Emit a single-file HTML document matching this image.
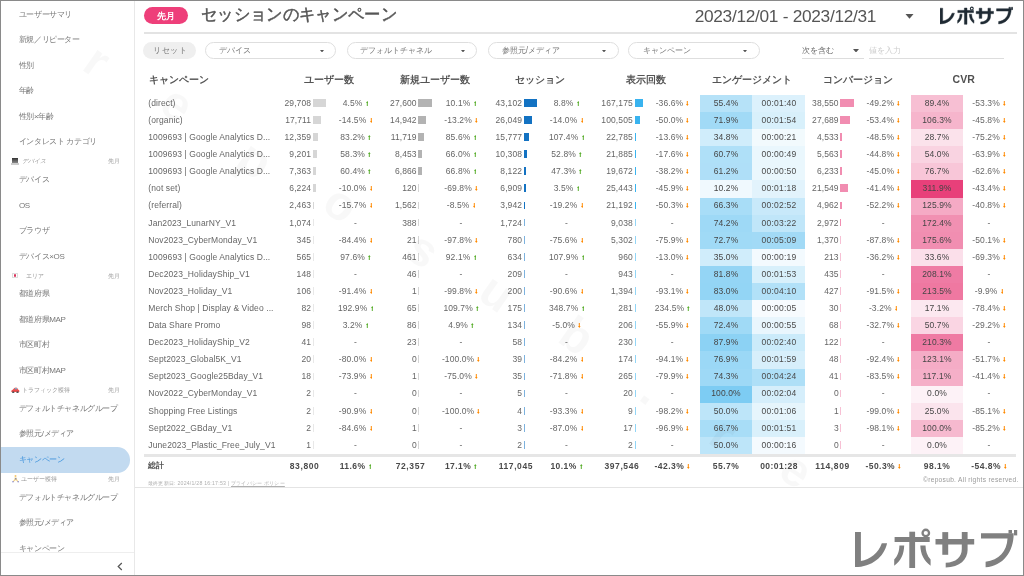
<!DOCTYPE html><html><head><meta charset="utf-8"><style>
html,body{margin:0;padding:0;}
body{width:1024px;height:576px;overflow:hidden;position:relative;background:#fff;font-family:"Liberation Sans", sans-serif;}
.t{position:absolute;white-space:nowrap;}
.r{position:absolute;}
</style></head><body><div id="w" style="position:absolute;left:0;top:0;width:1024px;height:576px;will-change:transform;">
<div class="r" style="left:134.00px;top:1.00px;width:1.00px;height:575.00px;background:#e8e8e8;"></div>
<div style="position:absolute;left:0;top:0;width:134px;height:552px;overflow:hidden;">
<div class="t" style="top:4.85px;height:20px;line-height:20px;font-size:8px;color:#777;letter-spacing:-0.4px;left:18.90px;">ユーザーサマリ</div>
<div class="t" style="top:30.35px;height:20px;line-height:20px;font-size:8px;color:#777;letter-spacing:-0.4px;left:18.90px;">新規／リピーター</div>
<div class="t" style="top:55.85px;height:20px;line-height:20px;font-size:8px;color:#777;letter-spacing:-0.4px;left:18.90px;">性別</div>
<div class="t" style="top:81.35px;height:20px;line-height:20px;font-size:8px;color:#777;letter-spacing:-0.4px;left:18.90px;">年齢</div>
<div class="t" style="top:106.85px;height:20px;line-height:20px;font-size:8px;color:#777;letter-spacing:-0.4px;left:18.90px;">性別×年齢</div>
<div class="t" style="top:132.35px;height:20px;line-height:20px;font-size:8px;color:#777;letter-spacing:-0.4px;left:18.90px;">インタレスト カテゴリ</div>
<div class="r" style="left:11.50px;top:157.75px;width:6.50px;height:5.50px;background:#555;background:linear-gradient(#333,#888);"></div>
<div class="r" style="left:11.00px;top:163.25px;width:7.50px;height:1.50px;background:#ccc;"></div>
<div class="t" style="top:151.25px;height:20px;line-height:20px;font-size:6px;color:#999;left:21.50px;font-style:italic;">デバイス</div>
<div class="t" style="top:151.25px;height:20px;line-height:20px;font-size:6px;color:#a0a0a0;left:108.30px;">先月</div>
<div class="t" style="top:170.15px;height:20px;line-height:20px;font-size:8px;color:#777;letter-spacing:-0.4px;left:18.90px;">デバイス</div>
<div class="t" style="top:195.65px;height:20px;line-height:20px;font-size:8px;color:#777;letter-spacing:-0.4px;left:18.90px;">OS</div>
<div class="t" style="top:221.15px;height:20px;line-height:20px;font-size:8px;color:#777;letter-spacing:-0.4px;left:18.90px;">ブラウザ</div>
<div class="t" style="top:246.65px;height:20px;line-height:20px;font-size:8px;color:#777;letter-spacing:-0.4px;left:18.90px;">デバイス×OS</div>
<div class="r" style="left:11.80px;top:272.75px;width:6.40px;height:5.60px;background:#fff;border:0.5px solid #ddd;box-sizing:border-box;"></div>
<div class="r" style="left:13.80px;top:274.25px;width:2.60px;height:2.60px;background:#d9325a;border-radius:50%;"></div>
<div class="t" style="top:265.55px;height:20px;line-height:20px;font-size:6px;color:#999;left:26.00px;">エリア</div>
<div class="t" style="top:265.55px;height:20px;line-height:20px;font-size:6px;color:#a0a0a0;left:108.30px;">先月</div>
<div class="t" style="top:284.45px;height:20px;line-height:20px;font-size:8px;color:#777;letter-spacing:-0.4px;left:18.90px;">都道府県</div>
<div class="t" style="top:309.95px;height:20px;line-height:20px;font-size:8px;color:#777;letter-spacing:-0.4px;left:18.90px;">都道府県MAP</div>
<div class="t" style="top:335.45px;height:20px;line-height:20px;font-size:8px;color:#777;letter-spacing:-0.4px;left:18.90px;">市区町村</div>
<div class="t" style="top:360.95px;height:20px;line-height:20px;font-size:8px;color:#777;letter-spacing:-0.4px;left:18.90px;">市区町村MAP</div>
<svg style="position:absolute;left:11px;top:386.65px" width="8.5" height="6.5" viewBox="0 0 17 13"><path d="M4 5 Q6 1 10 1 Q13 1 14 5 L16 6 Q17 7 16.5 10 L1 10 Q0 8 1 7 Z" fill="#ec4b4b"/><path d="M6.5 4.5 Q8 2 10 2 Q12 2 12.5 4.5 Z" fill="#5ec3e8"/><circle cx="4.5" cy="10.5" r="2.2" fill="#555"/><circle cx="13" cy="10.5" r="2.2" fill="#555"/></svg>
<div class="t" style="top:379.85px;height:20px;line-height:20px;font-size:6px;color:#999;left:22.00px;">トラフィック獲得</div>
<div class="t" style="top:379.85px;height:20px;line-height:20px;font-size:6px;color:#a0a0a0;left:108.30px;">先月</div>
<div class="t" style="top:398.75px;height:20px;line-height:20px;font-size:8px;color:#777;letter-spacing:-0.4px;left:18.90px;">デフォルトチャネルグループ</div>
<div class="t" style="top:424.25px;height:20px;line-height:20px;font-size:8px;color:#777;letter-spacing:-0.4px;left:18.90px;">参照元/メディア</div>
<div class="r" style="left:1.00px;top:447.00px;width:129.00px;height:25.50px;background:#c2daf0;border-radius:0 12.75px 12.75px 0;"></div>
<div class="t" style="top:449.75px;height:20px;line-height:20px;font-size:8px;color:#3f93dc;letter-spacing:-0.4px;left:18.90px;">キャンペーン</div>
<svg style="position:absolute;left:11.5px;top:475.05px" width="7" height="7.5" viewBox="0 0 14 15"><circle cx="7" cy="2.2" r="2" fill="#f5c76b"/><path d="M5 5 L9 5 L10 9 L13 13 L11.5 14 L7.5 10 L3 14 L1.5 13 L5 8 Z" fill="#f3d38a"/><path d="M6 6 L8.5 6 L9 9 L6 9 Z" fill="#8a8fb0"/><circle cx="2" cy="13.5" r="1.3" fill="#6b70c8"/><circle cx="12.3" cy="13.5" r="1.3" fill="#6b70c8"/></svg>
<div class="t" style="top:468.65px;height:20px;line-height:20px;font-size:6px;color:#999;left:21.40px;">ユーザー獲得</div>
<div class="t" style="top:468.65px;height:20px;line-height:20px;font-size:6px;color:#a0a0a0;left:108.30px;">先月</div>
<div class="t" style="top:487.55px;height:20px;line-height:20px;font-size:8px;color:#777;letter-spacing:-0.4px;left:18.90px;">デフォルトチャネルグループ</div>
<div class="t" style="top:513.05px;height:20px;line-height:20px;font-size:8px;color:#777;letter-spacing:-0.4px;left:18.90px;">参照元/メディア</div>
<div class="t" style="top:538.55px;height:20px;line-height:20px;font-size:8px;color:#777;letter-spacing:-0.4px;left:18.90px;">キャンペーン</div>
</div>
<div class="r" style="left:1.00px;top:552.00px;width:133.00px;height:1.00px;background:#eeeeee;"></div>
<svg style="position:absolute;left:117px;top:562px" width="6" height="9" viewBox="0 0 6 9"><path d="M4.8 1 L1.2 4.5 L4.8 8" fill="none" stroke="#555" stroke-width="1.2"/></svg>
<div class="r" style="left:143.60px;top:6.50px;width:44.00px;height:17.30px;background:#ee3f7a;border-radius:8.7px;"></div>
<div class="t" style="top:6.40px;height:20px;line-height:20px;font-size:8.6px;color:#fff;font-weight:bold;left:15.50px;width:300px;text-align:center;">先月</div>
<div class="t" style="top:4.00px;height:20px;line-height:20px;font-size:16.5px;color:#555;left:200.80px;-webkit-text-stroke:0.45px #555;transform:scaleX(0.96);transform-origin:0 0;">セッションのキャンペーン</div>
<div class="t" style="top:5.70px;height:20px;line-height:20px;font-size:17.3px;color:#555;letter-spacing:-0.3px;left:694.70px;">2023/12/01 - 2023/12/31</div>
<svg style="position:absolute;left:905px;top:13.5px" width="9" height="5" viewBox="0 0 9 5"><path d="M0.5 0 L8.5 0 L4.5 4.8 Z" fill="#555"/></svg>
<div class="r" style="left:143.60px;top:32.40px;width:873.00px;height:1.50px;background:#e3e3e3;"></div>
<svg style="position:absolute;left:940.3px;top:5.35px" width="73.19" height="19.53" viewBox="0 -5 163 43.5"><g fill="#1f2a33" stroke="#1f2a33" stroke-width="1.0" stroke-linejoin="round"><path d="M0 2.1 L5.9 2.1 L5.9 30.9 C15 29.5 23.5 23 26.8 13.2 L32.1 13.2 C29 27 17 37 0 37.1 Z"/><path d="M39.6 7 L74.7 7 L74.7 12 L39.6 12 Z"/><path d="M54.3 1.7 L60.1 1.7 L60.1 38 L54.3 38 Z"/><path d="M44.4 15.5 L49.2 15.5 C49 24 46 31 39.2 35.7 L39.2 29.5 C43 25.5 44.3 21 44.4 15.5 Z"/><path d="M70.5 15.5 L65.3 15.5 C65.5 24 69 31 75.6 35.7 L75.6 29.5 C72 25.5 70.6 21 70.5 15.5 Z"/><circle cx="70.8" cy="3.0" r="3.25" fill="none" style="stroke-width:2.3px"/><path d="M80.5 9.1 L119.2 9.1 L119.2 14.4 L80.5 14.4 Z"/><path d="M87.3 2.1 L93.2 2.1 L93.2 24.8 L87.3 24.8 Z"/><path d="M106.8 2.1 L112.6 2.1 L112.6 20 C112.6 29 105 37.5 90.7 37.5 L90.7 32.7 C101 32.5 106.8 27 106.8 19 Z"/><path d="M126 3.2 L158.7 3.2 C158.7 22 148 36 130.6 37.2 L130.6 31.8 C144 30 152 21 152.5 8.5 L126 8.5 Z"/><path d="M153.5 0 L157 0 L157 3.5 L153.5 3.5 Z"/><path d="M159 0 L162.2 0 L162.2 5.4 L159 5.4 Z"/></g></svg>
<div class="r" style="left:143.20px;top:41.90px;width:53.10px;height:17.50px;background:#efefef;border-radius:8.75px;"></div>
<div class="t" style="top:40.60px;height:20px;line-height:20px;font-size:8.2px;color:#777;letter-spacing:0.6px;left:20.50px;width:300px;text-align:center;">リセット</div>
<div class="r" style="left:205.4px;top:41.9px;width:130.90px;height:17.5px;border:1.4px solid #dedede;border-radius:9px;box-sizing:border-box;"></div>
<div class="t" style="top:40.60px;height:20px;line-height:20px;font-size:8.2px;color:#777;left:219.20px;">デバイス</div>
<svg style="position:absolute;left:319.7px;top:49.6px" width="4" height="2.5" viewBox="0 0 4 2.5"><path d="M0 0 L4 0 L2 2.5 Z" fill="#555"/></svg>
<div class="r" style="left:346.6px;top:41.9px;width:130.90px;height:17.5px;border:1.4px solid #dedede;border-radius:9px;box-sizing:border-box;"></div>
<div class="t" style="top:40.60px;height:20px;line-height:20px;font-size:8.2px;color:#777;left:360.40px;">デフォルトチャネル</div>
<svg style="position:absolute;left:460.9px;top:49.6px" width="4" height="2.5" viewBox="0 0 4 2.5"><path d="M0 0 L4 0 L2 2.5 Z" fill="#555"/></svg>
<div class="r" style="left:487.8px;top:41.9px;width:130.80px;height:17.5px;border:1.4px solid #dedede;border-radius:9px;box-sizing:border-box;"></div>
<div class="t" style="top:40.60px;height:20px;line-height:20px;font-size:8.2px;color:#777;left:501.70px;">参照元/メディア</div>
<svg style="position:absolute;left:602px;top:49.6px" width="4" height="2.5" viewBox="0 0 4 2.5"><path d="M0 0 L4 0 L2 2.5 Z" fill="#555"/></svg>
<div class="r" style="left:628.4px;top:41.9px;width:131.60px;height:17.5px;border:1.4px solid #dedede;border-radius:9px;box-sizing:border-box;"></div>
<div class="t" style="top:40.60px;height:20px;line-height:20px;font-size:8.2px;color:#777;left:643.20px;">キャンペーン</div>
<svg style="position:absolute;left:743px;top:49.6px" width="4" height="2.5" viewBox="0 0 4 2.5"><path d="M0 0 L4 0 L2 2.5 Z" fill="#555"/></svg>
<div class="t" style="top:40.60px;height:20px;line-height:20px;font-size:8.2px;color:#666;left:802.30px;">次を含む</div>
<svg style="position:absolute;left:853.4px;top:48.9px" width="6" height="3.5" viewBox="0 0 6 3.5"><path d="M0 0 L6 0 L3 3.5 Z" fill="#555"/></svg>
<div class="r" style="left:802.00px;top:58.00px;width:61.50px;height:0.80px;background:#ddd;"></div>
<div class="t" style="top:40.60px;height:20px;line-height:20px;font-size:8.2px;color:#ccc;left:868.70px;">値を入力</div>
<div class="r" style="left:869.00px;top:58.00px;width:135.00px;height:0.80px;background:#ddd;"></div>
<div class="t" style="top:69.60px;height:20px;line-height:20px;font-size:9.5px;color:#555;font-weight:bold;left:148.60px;">キャンペーン</div>
<div class="t" style="top:69.60px;height:20px;line-height:20px;font-size:9.5px;color:#555;font-weight:bold;left:179.10px;width:300px;text-align:center;">ユーザー数</div>
<div class="t" style="top:69.60px;height:20px;line-height:20px;font-size:9.5px;color:#555;font-weight:bold;left:284.70px;width:300px;text-align:center;">新規ユーザー数</div>
<div class="t" style="top:69.60px;height:20px;line-height:20px;font-size:9.5px;color:#555;font-weight:bold;left:390.20px;width:300px;text-align:center;">セッション</div>
<div class="t" style="top:69.60px;height:20px;line-height:20px;font-size:9.5px;color:#555;font-weight:bold;left:496.00px;width:300px;text-align:center;">表示回数</div>
<div class="t" style="top:69.60px;height:20px;line-height:20px;font-size:9.5px;color:#555;font-weight:bold;left:602.40px;width:300px;text-align:center;">エンゲージメント</div>
<div class="t" style="top:69.60px;height:20px;line-height:20px;font-size:9.5px;color:#555;font-weight:bold;left:707.50px;width:300px;text-align:center;">コンバージョン</div>
<div class="t" style="top:68.90px;height:20px;line-height:20px;font-size:10.5px;color:#505050;font-weight:bold;left:813.70px;width:300px;text-align:center;">CVR</div>
<div class="r" style="left:699.50px;top:95.00px;width:52.80px;height:17.14px;background:#b6e2f8;"></div>
<div class="r" style="left:752.30px;top:95.00px;width:52.80px;height:17.14px;background:#dcf1fc;"></div>
<div class="r" style="left:910.70px;top:95.00px;width:52.80px;height:17.14px;background:#f7bfd3;"></div>
<div class="t" style="top:92.85px;height:20px;line-height:20px;font-size:8.5px;color:#666;letter-spacing:0.1px;left:148.30px;">(direct)</div>
<div class="t" style="top:92.85px;height:20px;line-height:20px;font-size:8.5px;color:#666;letter-spacing:0.1px;right:713.00px;margin-right:-0.1px;">29,708</div>
<div class="r" style="left:313.00px;top:99.00px;width:13.00px;height:7.80px;background:#d6d6d6;"></div>
<div class="t" style="top:92.85px;height:20px;line-height:20px;font-size:8.5px;color:#666;letter-spacing:0.1px;right:607.40px;margin-right:-0.1px;">27,600</div>
<div class="r" style="left:418.20px;top:99.00px;width:13.60px;height:7.80px;background:#b3b3b3;"></div>
<div class="t" style="top:92.85px;height:20px;line-height:20px;font-size:8.5px;color:#666;letter-spacing:0.1px;right:502.00px;margin-right:-0.1px;">43,102</div>
<div class="r" style="left:524.00px;top:99.00px;width:13.00px;height:7.80px;background:#1372c2;"></div>
<div class="t" style="top:92.85px;height:20px;line-height:20px;font-size:8.5px;color:#666;letter-spacing:0.1px;right:391.30px;margin-right:-0.1px;">167,175</div>
<div class="r" style="left:634.70px;top:99.00px;width:8.30px;height:7.80px;background:#39b3ef;"></div>
<div class="t" style="top:92.85px;height:20px;line-height:20px;font-size:8.5px;color:#666;letter-spacing:0.1px;right:185.40px;margin-right:-0.1px;">38,550</div>
<div class="r" style="left:840.20px;top:99.00px;width:13.80px;height:7.80px;background:#f18db1;"></div>
<div class="t" style="top:92.85px;height:20px;line-height:20px;font-size:8.5px;color:#666;letter-spacing:0.1px;left:205.50px;width:300px;text-align:center;">4.5%<svg width="2.6" height="5" viewBox="0 0 2.6 5" style="margin-left:3.2px;vertical-align:0px"><path d="M1.3 0 L2.6 2 L1.8 2 L1.8 5 L0.8 5 L0.8 2 L0 2 Z" fill="#5aae2e"/></svg></div>
<div class="t" style="top:92.85px;height:20px;line-height:20px;font-size:8.5px;color:#666;letter-spacing:0.1px;left:311.00px;width:300px;text-align:center;">10.1%<svg width="2.6" height="5" viewBox="0 0 2.6 5" style="margin-left:3.2px;vertical-align:0px"><path d="M1.3 0 L2.6 2 L1.8 2 L1.8 5 L0.8 5 L0.8 2 L0 2 Z" fill="#5aae2e"/></svg></div>
<div class="t" style="top:92.85px;height:20px;line-height:20px;font-size:8.5px;color:#666;letter-spacing:0.1px;left:416.50px;width:300px;text-align:center;">8.8%<svg width="2.6" height="5" viewBox="0 0 2.6 5" style="margin-left:3.2px;vertical-align:0px"><path d="M1.3 0 L2.6 2 L1.8 2 L1.8 5 L0.8 5 L0.8 2 L0 2 Z" fill="#5aae2e"/></svg></div>
<div class="t" style="top:92.85px;height:20px;line-height:20px;font-size:8.5px;color:#666;letter-spacing:0.1px;left:522.30px;width:300px;text-align:center;">-36.6%<svg width="2.6" height="5" viewBox="0 0 2.6 5" style="margin-left:3.2px;vertical-align:0px"><path d="M1.3 5 L2.6 3 L1.8 3 L1.8 0 L0.8 0 L0.8 3 L0 3 Z" fill="#ff8a00"/></svg></div>
<div class="t" style="top:92.85px;height:20px;line-height:20px;font-size:8.5px;color:#666;letter-spacing:0.1px;left:733.20px;width:300px;text-align:center;">-49.2%<svg width="2.6" height="5" viewBox="0 0 2.6 5" style="margin-left:3.2px;vertical-align:0px"><path d="M1.3 5 L2.6 3 L1.8 3 L1.8 0 L0.8 0 L0.8 3 L0 3 Z" fill="#ff8a00"/></svg></div>
<div class="t" style="top:92.85px;height:20px;line-height:20px;font-size:8.5px;color:#666;letter-spacing:0.1px;left:839.00px;width:300px;text-align:center;">-53.3%<svg width="2.6" height="5" viewBox="0 0 2.6 5" style="margin-left:3.2px;vertical-align:0px"><path d="M1.3 5 L2.6 3 L1.8 3 L1.8 0 L0.8 0 L0.8 3 L0 3 Z" fill="#ff8a00"/></svg></div>
<div class="t" style="top:92.85px;height:20px;line-height:20px;font-size:8.5px;color:#464646;letter-spacing:0.1px;left:576.00px;width:300px;text-align:center;">55.4%</div>
<div class="t" style="top:92.85px;height:20px;line-height:20px;font-size:8.5px;color:#4a4a4a;letter-spacing:0.25px;left:629.00px;width:300px;text-align:center;">00:01:40</div>
<div class="t" style="top:92.85px;height:20px;line-height:20px;font-size:8.5px;color:#464646;letter-spacing:0.1px;left:787.00px;width:300px;text-align:center;">89.4%</div>
<div class="r" style="left:699.50px;top:112.09px;width:52.80px;height:17.14px;background:#a1daf6;"></div>
<div class="r" style="left:752.30px;top:112.09px;width:52.80px;height:17.14px;background:#d8f0fb;"></div>
<div class="r" style="left:910.70px;top:112.09px;width:52.80px;height:17.14px;background:#f6b5cc;"></div>
<div class="t" style="top:109.94px;height:20px;line-height:20px;font-size:8.5px;color:#666;letter-spacing:0.1px;left:148.30px;">(organic)</div>
<div class="t" style="top:109.94px;height:20px;line-height:20px;font-size:8.5px;color:#666;letter-spacing:0.1px;right:713.00px;margin-right:-0.1px;">17,711</div>
<div class="r" style="left:313.00px;top:116.09px;width:7.75px;height:7.80px;background:#d6d6d6;"></div>
<div class="t" style="top:109.94px;height:20px;line-height:20px;font-size:8.5px;color:#666;letter-spacing:0.1px;right:607.40px;margin-right:-0.1px;">14,942</div>
<div class="r" style="left:418.20px;top:116.09px;width:7.36px;height:7.80px;background:#b3b3b3;"></div>
<div class="t" style="top:109.94px;height:20px;line-height:20px;font-size:8.5px;color:#666;letter-spacing:0.1px;right:502.00px;margin-right:-0.1px;">26,049</div>
<div class="r" style="left:524.00px;top:116.09px;width:7.86px;height:7.80px;background:#1372c2;"></div>
<div class="t" style="top:109.94px;height:20px;line-height:20px;font-size:8.5px;color:#666;letter-spacing:0.1px;right:391.30px;margin-right:-0.1px;">100,505</div>
<div class="r" style="left:634.70px;top:116.09px;width:4.99px;height:7.80px;background:#39b3ef;"></div>
<div class="t" style="top:109.94px;height:20px;line-height:20px;font-size:8.5px;color:#666;letter-spacing:0.1px;right:185.40px;margin-right:-0.1px;">27,689</div>
<div class="r" style="left:840.20px;top:116.09px;width:9.91px;height:7.80px;background:#f18db1;"></div>
<div class="t" style="top:109.94px;height:20px;line-height:20px;font-size:8.5px;color:#666;letter-spacing:0.1px;left:205.50px;width:300px;text-align:center;">-14.5%<svg width="2.6" height="5" viewBox="0 0 2.6 5" style="margin-left:3.2px;vertical-align:0px"><path d="M1.3 5 L2.6 3 L1.8 3 L1.8 0 L0.8 0 L0.8 3 L0 3 Z" fill="#ff8a00"/></svg></div>
<div class="t" style="top:109.94px;height:20px;line-height:20px;font-size:8.5px;color:#666;letter-spacing:0.1px;left:311.00px;width:300px;text-align:center;">-13.2%<svg width="2.6" height="5" viewBox="0 0 2.6 5" style="margin-left:3.2px;vertical-align:0px"><path d="M1.3 5 L2.6 3 L1.8 3 L1.8 0 L0.8 0 L0.8 3 L0 3 Z" fill="#ff8a00"/></svg></div>
<div class="t" style="top:109.94px;height:20px;line-height:20px;font-size:8.5px;color:#666;letter-spacing:0.1px;left:416.50px;width:300px;text-align:center;">-14.0%<svg width="2.6" height="5" viewBox="0 0 2.6 5" style="margin-left:3.2px;vertical-align:0px"><path d="M1.3 5 L2.6 3 L1.8 3 L1.8 0 L0.8 0 L0.8 3 L0 3 Z" fill="#ff8a00"/></svg></div>
<div class="t" style="top:109.94px;height:20px;line-height:20px;font-size:8.5px;color:#666;letter-spacing:0.1px;left:522.30px;width:300px;text-align:center;">-50.0%<svg width="2.6" height="5" viewBox="0 0 2.6 5" style="margin-left:3.2px;vertical-align:0px"><path d="M1.3 5 L2.6 3 L1.8 3 L1.8 0 L0.8 0 L0.8 3 L0 3 Z" fill="#ff8a00"/></svg></div>
<div class="t" style="top:109.94px;height:20px;line-height:20px;font-size:8.5px;color:#666;letter-spacing:0.1px;left:733.20px;width:300px;text-align:center;">-53.4%<svg width="2.6" height="5" viewBox="0 0 2.6 5" style="margin-left:3.2px;vertical-align:0px"><path d="M1.3 5 L2.6 3 L1.8 3 L1.8 0 L0.8 0 L0.8 3 L0 3 Z" fill="#ff8a00"/></svg></div>
<div class="t" style="top:109.94px;height:20px;line-height:20px;font-size:8.5px;color:#666;letter-spacing:0.1px;left:839.00px;width:300px;text-align:center;">-45.8%<svg width="2.6" height="5" viewBox="0 0 2.6 5" style="margin-left:3.2px;vertical-align:0px"><path d="M1.3 5 L2.6 3 L1.8 3 L1.8 0 L0.8 0 L0.8 3 L0 3 Z" fill="#ff8a00"/></svg></div>
<div class="t" style="top:109.94px;height:20px;line-height:20px;font-size:8.5px;color:#464646;letter-spacing:0.1px;left:576.00px;width:300px;text-align:center;">71.9%</div>
<div class="t" style="top:109.94px;height:20px;line-height:20px;font-size:8.5px;color:#4a4a4a;letter-spacing:0.25px;left:629.00px;width:300px;text-align:center;">00:01:54</div>
<div class="t" style="top:109.94px;height:20px;line-height:20px;font-size:8.5px;color:#464646;letter-spacing:0.1px;left:787.00px;width:300px;text-align:center;">106.3%</div>
<div class="r" style="left:699.50px;top:129.19px;width:52.80px;height:17.14px;background:#d0edfb;"></div>
<div class="r" style="left:752.30px;top:129.19px;width:52.80px;height:17.14px;background:#f2fafd;"></div>
<div class="r" style="left:910.70px;top:129.19px;width:52.80px;height:17.14px;background:#fbe2eb;"></div>
<div class="t" style="top:127.04px;height:20px;line-height:20px;font-size:8.5px;color:#666;letter-spacing:0.1px;left:148.30px;">1009693 | Google Analytics D...</div>
<div class="t" style="top:127.04px;height:20px;line-height:20px;font-size:8.5px;color:#666;letter-spacing:0.1px;right:713.00px;margin-right:-0.1px;">12,359</div>
<div class="r" style="left:313.00px;top:133.19px;width:5.41px;height:7.80px;background:#d6d6d6;"></div>
<div class="t" style="top:127.04px;height:20px;line-height:20px;font-size:8.5px;color:#666;letter-spacing:0.1px;right:607.40px;margin-right:-0.1px;">11,719</div>
<div class="r" style="left:418.20px;top:133.19px;width:5.77px;height:7.80px;background:#b3b3b3;"></div>
<div class="t" style="top:127.04px;height:20px;line-height:20px;font-size:8.5px;color:#666;letter-spacing:0.1px;right:502.00px;margin-right:-0.1px;">15,777</div>
<div class="r" style="left:524.00px;top:133.19px;width:4.76px;height:7.80px;background:#1372c2;"></div>
<div class="t" style="top:127.04px;height:20px;line-height:20px;font-size:8.5px;color:#666;letter-spacing:0.1px;right:391.30px;margin-right:-0.1px;">22,785</div>
<div class="r" style="left:634.70px;top:133.19px;width:1.13px;height:7.80px;background:#39b3ef;"></div>
<div class="t" style="top:127.04px;height:20px;line-height:20px;font-size:8.5px;color:#666;letter-spacing:0.1px;right:185.40px;margin-right:-0.1px;">4,533</div>
<div class="r" style="left:840.20px;top:133.19px;width:1.62px;height:7.80px;background:#f18db1;"></div>
<div class="t" style="top:127.04px;height:20px;line-height:20px;font-size:8.5px;color:#666;letter-spacing:0.1px;left:205.50px;width:300px;text-align:center;">83.2%<svg width="2.6" height="5" viewBox="0 0 2.6 5" style="margin-left:3.2px;vertical-align:0px"><path d="M1.3 0 L2.6 2 L1.8 2 L1.8 5 L0.8 5 L0.8 2 L0 2 Z" fill="#5aae2e"/></svg></div>
<div class="t" style="top:127.04px;height:20px;line-height:20px;font-size:8.5px;color:#666;letter-spacing:0.1px;left:311.00px;width:300px;text-align:center;">85.6%<svg width="2.6" height="5" viewBox="0 0 2.6 5" style="margin-left:3.2px;vertical-align:0px"><path d="M1.3 0 L2.6 2 L1.8 2 L1.8 5 L0.8 5 L0.8 2 L0 2 Z" fill="#5aae2e"/></svg></div>
<div class="t" style="top:127.04px;height:20px;line-height:20px;font-size:8.5px;color:#666;letter-spacing:0.1px;left:416.50px;width:300px;text-align:center;">107.4%<svg width="2.6" height="5" viewBox="0 0 2.6 5" style="margin-left:3.2px;vertical-align:0px"><path d="M1.3 0 L2.6 2 L1.8 2 L1.8 5 L0.8 5 L0.8 2 L0 2 Z" fill="#5aae2e"/></svg></div>
<div class="t" style="top:127.04px;height:20px;line-height:20px;font-size:8.5px;color:#666;letter-spacing:0.1px;left:522.30px;width:300px;text-align:center;">-13.6%<svg width="2.6" height="5" viewBox="0 0 2.6 5" style="margin-left:3.2px;vertical-align:0px"><path d="M1.3 5 L2.6 3 L1.8 3 L1.8 0 L0.8 0 L0.8 3 L0 3 Z" fill="#ff8a00"/></svg></div>
<div class="t" style="top:127.04px;height:20px;line-height:20px;font-size:8.5px;color:#666;letter-spacing:0.1px;left:733.20px;width:300px;text-align:center;">-48.5%<svg width="2.6" height="5" viewBox="0 0 2.6 5" style="margin-left:3.2px;vertical-align:0px"><path d="M1.3 5 L2.6 3 L1.8 3 L1.8 0 L0.8 0 L0.8 3 L0 3 Z" fill="#ff8a00"/></svg></div>
<div class="t" style="top:127.04px;height:20px;line-height:20px;font-size:8.5px;color:#666;letter-spacing:0.1px;left:839.00px;width:300px;text-align:center;">-75.2%<svg width="2.6" height="5" viewBox="0 0 2.6 5" style="margin-left:3.2px;vertical-align:0px"><path d="M1.3 5 L2.6 3 L1.8 3 L1.8 0 L0.8 0 L0.8 3 L0 3 Z" fill="#ff8a00"/></svg></div>
<div class="t" style="top:127.04px;height:20px;line-height:20px;font-size:8.5px;color:#464646;letter-spacing:0.1px;left:576.00px;width:300px;text-align:center;">34.8%</div>
<div class="t" style="top:127.04px;height:20px;line-height:20px;font-size:8.5px;color:#4a4a4a;letter-spacing:0.25px;left:629.00px;width:300px;text-align:center;">00:00:21</div>
<div class="t" style="top:127.04px;height:20px;line-height:20px;font-size:8.5px;color:#464646;letter-spacing:0.1px;left:787.00px;width:300px;text-align:center;">28.7%</div>
<div class="r" style="left:699.50px;top:146.28px;width:52.80px;height:17.14px;background:#afe0f8;"></div>
<div class="r" style="left:752.30px;top:146.28px;width:52.80px;height:17.14px;background:#eaf7fd;"></div>
<div class="r" style="left:910.70px;top:146.28px;width:52.80px;height:17.14px;background:#f9d3e1;"></div>
<div class="t" style="top:144.13px;height:20px;line-height:20px;font-size:8.5px;color:#666;letter-spacing:0.1px;left:148.30px;">1009693 | Google Analytics D...</div>
<div class="t" style="top:144.13px;height:20px;line-height:20px;font-size:8.5px;color:#666;letter-spacing:0.1px;right:713.00px;margin-right:-0.1px;">9,201</div>
<div class="r" style="left:313.00px;top:150.28px;width:4.03px;height:7.80px;background:#d6d6d6;"></div>
<div class="t" style="top:144.13px;height:20px;line-height:20px;font-size:8.5px;color:#666;letter-spacing:0.1px;right:607.40px;margin-right:-0.1px;">8,453</div>
<div class="r" style="left:418.20px;top:150.28px;width:4.17px;height:7.80px;background:#b3b3b3;"></div>
<div class="t" style="top:144.13px;height:20px;line-height:20px;font-size:8.5px;color:#666;letter-spacing:0.1px;right:502.00px;margin-right:-0.1px;">10,308</div>
<div class="r" style="left:524.00px;top:150.28px;width:3.11px;height:7.80px;background:#1372c2;"></div>
<div class="t" style="top:144.13px;height:20px;line-height:20px;font-size:8.5px;color:#666;letter-spacing:0.1px;right:391.30px;margin-right:-0.1px;">21,885</div>
<div class="r" style="left:634.70px;top:150.28px;width:1.09px;height:7.80px;background:#39b3ef;"></div>
<div class="t" style="top:144.13px;height:20px;line-height:20px;font-size:8.5px;color:#666;letter-spacing:0.1px;right:185.40px;margin-right:-0.1px;">5,563</div>
<div class="r" style="left:840.20px;top:150.28px;width:1.99px;height:7.80px;background:#f18db1;"></div>
<div class="t" style="top:144.13px;height:20px;line-height:20px;font-size:8.5px;color:#666;letter-spacing:0.1px;left:205.50px;width:300px;text-align:center;">58.3%<svg width="2.6" height="5" viewBox="0 0 2.6 5" style="margin-left:3.2px;vertical-align:0px"><path d="M1.3 0 L2.6 2 L1.8 2 L1.8 5 L0.8 5 L0.8 2 L0 2 Z" fill="#5aae2e"/></svg></div>
<div class="t" style="top:144.13px;height:20px;line-height:20px;font-size:8.5px;color:#666;letter-spacing:0.1px;left:311.00px;width:300px;text-align:center;">66.0%<svg width="2.6" height="5" viewBox="0 0 2.6 5" style="margin-left:3.2px;vertical-align:0px"><path d="M1.3 0 L2.6 2 L1.8 2 L1.8 5 L0.8 5 L0.8 2 L0 2 Z" fill="#5aae2e"/></svg></div>
<div class="t" style="top:144.13px;height:20px;line-height:20px;font-size:8.5px;color:#666;letter-spacing:0.1px;left:416.50px;width:300px;text-align:center;">52.8%<svg width="2.6" height="5" viewBox="0 0 2.6 5" style="margin-left:3.2px;vertical-align:0px"><path d="M1.3 0 L2.6 2 L1.8 2 L1.8 5 L0.8 5 L0.8 2 L0 2 Z" fill="#5aae2e"/></svg></div>
<div class="t" style="top:144.13px;height:20px;line-height:20px;font-size:8.5px;color:#666;letter-spacing:0.1px;left:522.30px;width:300px;text-align:center;">-17.6%<svg width="2.6" height="5" viewBox="0 0 2.6 5" style="margin-left:3.2px;vertical-align:0px"><path d="M1.3 5 L2.6 3 L1.8 3 L1.8 0 L0.8 0 L0.8 3 L0 3 Z" fill="#ff8a00"/></svg></div>
<div class="t" style="top:144.13px;height:20px;line-height:20px;font-size:8.5px;color:#666;letter-spacing:0.1px;left:733.20px;width:300px;text-align:center;">-44.8%<svg width="2.6" height="5" viewBox="0 0 2.6 5" style="margin-left:3.2px;vertical-align:0px"><path d="M1.3 5 L2.6 3 L1.8 3 L1.8 0 L0.8 0 L0.8 3 L0 3 Z" fill="#ff8a00"/></svg></div>
<div class="t" style="top:144.13px;height:20px;line-height:20px;font-size:8.5px;color:#666;letter-spacing:0.1px;left:839.00px;width:300px;text-align:center;">-63.9%<svg width="2.6" height="5" viewBox="0 0 2.6 5" style="margin-left:3.2px;vertical-align:0px"><path d="M1.3 5 L2.6 3 L1.8 3 L1.8 0 L0.8 0 L0.8 3 L0 3 Z" fill="#ff8a00"/></svg></div>
<div class="t" style="top:144.13px;height:20px;line-height:20px;font-size:8.5px;color:#464646;letter-spacing:0.1px;left:576.00px;width:300px;text-align:center;">60.7%</div>
<div class="t" style="top:144.13px;height:20px;line-height:20px;font-size:8.5px;color:#4a4a4a;letter-spacing:0.25px;left:629.00px;width:300px;text-align:center;">00:00:49</div>
<div class="t" style="top:144.13px;height:20px;line-height:20px;font-size:8.5px;color:#464646;letter-spacing:0.1px;left:787.00px;width:300px;text-align:center;">54.0%</div>
<div class="r" style="left:699.50px;top:163.38px;width:52.80px;height:17.14px;background:#afdff8;"></div>
<div class="r" style="left:752.30px;top:163.38px;width:52.80px;height:17.14px;background:#eaf7fd;"></div>
<div class="r" style="left:910.70px;top:163.38px;width:52.80px;height:17.14px;background:#f8c6d8;"></div>
<div class="t" style="top:161.23px;height:20px;line-height:20px;font-size:8.5px;color:#666;letter-spacing:0.1px;left:148.30px;">1009693 | Google Analytics D...</div>
<div class="t" style="top:161.23px;height:20px;line-height:20px;font-size:8.5px;color:#666;letter-spacing:0.1px;right:713.00px;margin-right:-0.1px;">7,363</div>
<div class="r" style="left:313.00px;top:167.38px;width:3.22px;height:7.80px;background:#d6d6d6;"></div>
<div class="t" style="top:161.23px;height:20px;line-height:20px;font-size:8.5px;color:#666;letter-spacing:0.1px;right:607.40px;margin-right:-0.1px;">6,866</div>
<div class="r" style="left:418.20px;top:167.38px;width:3.38px;height:7.80px;background:#b3b3b3;"></div>
<div class="t" style="top:161.23px;height:20px;line-height:20px;font-size:8.5px;color:#666;letter-spacing:0.1px;right:502.00px;margin-right:-0.1px;">8,122</div>
<div class="r" style="left:524.00px;top:167.38px;width:2.45px;height:7.80px;background:#1372c2;"></div>
<div class="t" style="top:161.23px;height:20px;line-height:20px;font-size:8.5px;color:#666;letter-spacing:0.1px;right:391.30px;margin-right:-0.1px;">19,672</div>
<div class="r" style="left:634.70px;top:167.38px;width:0.98px;height:7.80px;background:#39b3ef;"></div>
<div class="t" style="top:161.23px;height:20px;line-height:20px;font-size:8.5px;color:#666;letter-spacing:0.1px;right:185.40px;margin-right:-0.1px;">6,233</div>
<div class="r" style="left:840.20px;top:167.38px;width:2.23px;height:7.80px;background:#f18db1;"></div>
<div class="t" style="top:161.23px;height:20px;line-height:20px;font-size:8.5px;color:#666;letter-spacing:0.1px;left:205.50px;width:300px;text-align:center;">60.4%<svg width="2.6" height="5" viewBox="0 0 2.6 5" style="margin-left:3.2px;vertical-align:0px"><path d="M1.3 0 L2.6 2 L1.8 2 L1.8 5 L0.8 5 L0.8 2 L0 2 Z" fill="#5aae2e"/></svg></div>
<div class="t" style="top:161.23px;height:20px;line-height:20px;font-size:8.5px;color:#666;letter-spacing:0.1px;left:311.00px;width:300px;text-align:center;">66.8%<svg width="2.6" height="5" viewBox="0 0 2.6 5" style="margin-left:3.2px;vertical-align:0px"><path d="M1.3 0 L2.6 2 L1.8 2 L1.8 5 L0.8 5 L0.8 2 L0 2 Z" fill="#5aae2e"/></svg></div>
<div class="t" style="top:161.23px;height:20px;line-height:20px;font-size:8.5px;color:#666;letter-spacing:0.1px;left:416.50px;width:300px;text-align:center;">47.3%<svg width="2.6" height="5" viewBox="0 0 2.6 5" style="margin-left:3.2px;vertical-align:0px"><path d="M1.3 0 L2.6 2 L1.8 2 L1.8 5 L0.8 5 L0.8 2 L0 2 Z" fill="#5aae2e"/></svg></div>
<div class="t" style="top:161.23px;height:20px;line-height:20px;font-size:8.5px;color:#666;letter-spacing:0.1px;left:522.30px;width:300px;text-align:center;">-38.2%<svg width="2.6" height="5" viewBox="0 0 2.6 5" style="margin-left:3.2px;vertical-align:0px"><path d="M1.3 5 L2.6 3 L1.8 3 L1.8 0 L0.8 0 L0.8 3 L0 3 Z" fill="#ff8a00"/></svg></div>
<div class="t" style="top:161.23px;height:20px;line-height:20px;font-size:8.5px;color:#666;letter-spacing:0.1px;left:733.20px;width:300px;text-align:center;">-45.0%<svg width="2.6" height="5" viewBox="0 0 2.6 5" style="margin-left:3.2px;vertical-align:0px"><path d="M1.3 5 L2.6 3 L1.8 3 L1.8 0 L0.8 0 L0.8 3 L0 3 Z" fill="#ff8a00"/></svg></div>
<div class="t" style="top:161.23px;height:20px;line-height:20px;font-size:8.5px;color:#666;letter-spacing:0.1px;left:839.00px;width:300px;text-align:center;">-62.6%<svg width="2.6" height="5" viewBox="0 0 2.6 5" style="margin-left:3.2px;vertical-align:0px"><path d="M1.3 5 L2.6 3 L1.8 3 L1.8 0 L0.8 0 L0.8 3 L0 3 Z" fill="#ff8a00"/></svg></div>
<div class="t" style="top:161.23px;height:20px;line-height:20px;font-size:8.5px;color:#464646;letter-spacing:0.1px;left:576.00px;width:300px;text-align:center;">61.2%</div>
<div class="t" style="top:161.23px;height:20px;line-height:20px;font-size:8.5px;color:#4a4a4a;letter-spacing:0.25px;left:629.00px;width:300px;text-align:center;">00:00:50</div>
<div class="t" style="top:161.23px;height:20px;line-height:20px;font-size:8.5px;color:#464646;letter-spacing:0.1px;left:787.00px;width:300px;text-align:center;">76.7%</div>
<div class="r" style="left:699.50px;top:180.47px;width:52.80px;height:17.14px;background:#f0f9fe;"></div>
<div class="r" style="left:752.30px;top:180.47px;width:52.80px;height:17.14px;background:#e2f3fc;"></div>
<div class="r" style="left:910.70px;top:180.47px;width:52.80px;height:17.14px;background:#e8407a;"></div>
<div class="t" style="top:178.32px;height:20px;line-height:20px;font-size:8.5px;color:#666;letter-spacing:0.1px;left:148.30px;">(not set)</div>
<div class="t" style="top:178.32px;height:20px;line-height:20px;font-size:8.5px;color:#666;letter-spacing:0.1px;right:713.00px;margin-right:-0.1px;">6,224</div>
<div class="r" style="left:313.00px;top:184.47px;width:2.72px;height:7.80px;background:#d6d6d6;"></div>
<div class="t" style="top:178.32px;height:20px;line-height:20px;font-size:8.5px;color:#666;letter-spacing:0.1px;right:607.40px;margin-right:-0.1px;">120</div>
<div class="r" style="left:418.20px;top:184.47px;width:0.80px;height:7.80px;background:#b3b3b3;opacity:0.55;"></div>
<div class="t" style="top:178.32px;height:20px;line-height:20px;font-size:8.5px;color:#666;letter-spacing:0.1px;right:502.00px;margin-right:-0.1px;">6,909</div>
<div class="r" style="left:524.00px;top:184.47px;width:2.08px;height:7.80px;background:#1372c2;"></div>
<div class="t" style="top:178.32px;height:20px;line-height:20px;font-size:8.5px;color:#666;letter-spacing:0.1px;right:391.30px;margin-right:-0.1px;">25,443</div>
<div class="r" style="left:634.70px;top:184.47px;width:1.26px;height:7.80px;background:#39b3ef;"></div>
<div class="t" style="top:178.32px;height:20px;line-height:20px;font-size:8.5px;color:#666;letter-spacing:0.1px;right:185.40px;margin-right:-0.1px;">21,549</div>
<div class="r" style="left:840.20px;top:184.47px;width:7.71px;height:7.80px;background:#f18db1;"></div>
<div class="t" style="top:178.32px;height:20px;line-height:20px;font-size:8.5px;color:#666;letter-spacing:0.1px;left:205.50px;width:300px;text-align:center;">-10.0%<svg width="2.6" height="5" viewBox="0 0 2.6 5" style="margin-left:3.2px;vertical-align:0px"><path d="M1.3 5 L2.6 3 L1.8 3 L1.8 0 L0.8 0 L0.8 3 L0 3 Z" fill="#ff8a00"/></svg></div>
<div class="t" style="top:178.32px;height:20px;line-height:20px;font-size:8.5px;color:#666;letter-spacing:0.1px;left:311.00px;width:300px;text-align:center;">-69.8%<svg width="2.6" height="5" viewBox="0 0 2.6 5" style="margin-left:3.2px;vertical-align:0px"><path d="M1.3 5 L2.6 3 L1.8 3 L1.8 0 L0.8 0 L0.8 3 L0 3 Z" fill="#ff8a00"/></svg></div>
<div class="t" style="top:178.32px;height:20px;line-height:20px;font-size:8.5px;color:#666;letter-spacing:0.1px;left:416.50px;width:300px;text-align:center;">3.5%<svg width="2.6" height="5" viewBox="0 0 2.6 5" style="margin-left:3.2px;vertical-align:0px"><path d="M1.3 0 L2.6 2 L1.8 2 L1.8 5 L0.8 5 L0.8 2 L0 2 Z" fill="#5aae2e"/></svg></div>
<div class="t" style="top:178.32px;height:20px;line-height:20px;font-size:8.5px;color:#666;letter-spacing:0.1px;left:522.30px;width:300px;text-align:center;">-45.9%<svg width="2.6" height="5" viewBox="0 0 2.6 5" style="margin-left:3.2px;vertical-align:0px"><path d="M1.3 5 L2.6 3 L1.8 3 L1.8 0 L0.8 0 L0.8 3 L0 3 Z" fill="#ff8a00"/></svg></div>
<div class="t" style="top:178.32px;height:20px;line-height:20px;font-size:8.5px;color:#666;letter-spacing:0.1px;left:733.20px;width:300px;text-align:center;">-41.4%<svg width="2.6" height="5" viewBox="0 0 2.6 5" style="margin-left:3.2px;vertical-align:0px"><path d="M1.3 5 L2.6 3 L1.8 3 L1.8 0 L0.8 0 L0.8 3 L0 3 Z" fill="#ff8a00"/></svg></div>
<div class="t" style="top:178.32px;height:20px;line-height:20px;font-size:8.5px;color:#666;letter-spacing:0.1px;left:839.00px;width:300px;text-align:center;">-43.4%<svg width="2.6" height="5" viewBox="0 0 2.6 5" style="margin-left:3.2px;vertical-align:0px"><path d="M1.3 5 L2.6 3 L1.8 3 L1.8 0 L0.8 0 L0.8 3 L0 3 Z" fill="#ff8a00"/></svg></div>
<div class="t" style="top:178.32px;height:20px;line-height:20px;font-size:8.5px;color:#464646;letter-spacing:0.1px;left:576.00px;width:300px;text-align:center;">10.2%</div>
<div class="t" style="top:178.32px;height:20px;line-height:20px;font-size:8.5px;color:#4a4a4a;letter-spacing:0.25px;left:629.00px;width:300px;text-align:center;">00:01:18</div>
<div class="t" style="top:178.32px;height:20px;line-height:20px;font-size:8.5px;color:#464646;letter-spacing:0.1px;left:787.00px;width:300px;text-align:center;">311.9%</div>
<div class="r" style="left:699.50px;top:197.57px;width:52.80px;height:17.14px;background:#a8ddf7;"></div>
<div class="r" style="left:752.30px;top:197.57px;width:52.80px;height:17.14px;background:#c8e9fa;"></div>
<div class="r" style="left:910.70px;top:197.57px;width:52.80px;height:17.14px;background:#f5aac5;"></div>
<div class="t" style="top:195.42px;height:20px;line-height:20px;font-size:8.5px;color:#666;letter-spacing:0.1px;left:148.30px;">(referral)</div>
<div class="t" style="top:195.42px;height:20px;line-height:20px;font-size:8.5px;color:#666;letter-spacing:0.1px;right:713.00px;margin-right:-0.1px;">2,463</div>
<div class="r" style="left:313.00px;top:201.57px;width:1.08px;height:7.80px;background:#d6d6d6;"></div>
<div class="t" style="top:195.42px;height:20px;line-height:20px;font-size:8.5px;color:#666;letter-spacing:0.1px;right:607.40px;margin-right:-0.1px;">1,562</div>
<div class="r" style="left:418.20px;top:201.57px;width:0.80px;height:7.80px;background:#b3b3b3;opacity:0.55;"></div>
<div class="t" style="top:195.42px;height:20px;line-height:20px;font-size:8.5px;color:#666;letter-spacing:0.1px;right:502.00px;margin-right:-0.1px;">3,942</div>
<div class="r" style="left:524.00px;top:201.57px;width:1.19px;height:7.80px;background:#1372c2;"></div>
<div class="t" style="top:195.42px;height:20px;line-height:20px;font-size:8.5px;color:#666;letter-spacing:0.1px;right:391.30px;margin-right:-0.1px;">21,192</div>
<div class="r" style="left:634.70px;top:201.57px;width:1.05px;height:7.80px;background:#39b3ef;"></div>
<div class="t" style="top:195.42px;height:20px;line-height:20px;font-size:8.5px;color:#666;letter-spacing:0.1px;right:185.40px;margin-right:-0.1px;">4,962</div>
<div class="r" style="left:840.20px;top:201.57px;width:1.78px;height:7.80px;background:#f18db1;"></div>
<div class="t" style="top:195.42px;height:20px;line-height:20px;font-size:8.5px;color:#666;letter-spacing:0.1px;left:205.50px;width:300px;text-align:center;">-15.7%<svg width="2.6" height="5" viewBox="0 0 2.6 5" style="margin-left:3.2px;vertical-align:0px"><path d="M1.3 5 L2.6 3 L1.8 3 L1.8 0 L0.8 0 L0.8 3 L0 3 Z" fill="#ff8a00"/></svg></div>
<div class="t" style="top:195.42px;height:20px;line-height:20px;font-size:8.5px;color:#666;letter-spacing:0.1px;left:311.00px;width:300px;text-align:center;">-8.5%<svg width="2.6" height="5" viewBox="0 0 2.6 5" style="margin-left:3.2px;vertical-align:0px"><path d="M1.3 5 L2.6 3 L1.8 3 L1.8 0 L0.8 0 L0.8 3 L0 3 Z" fill="#ff8a00"/></svg></div>
<div class="t" style="top:195.42px;height:20px;line-height:20px;font-size:8.5px;color:#666;letter-spacing:0.1px;left:416.50px;width:300px;text-align:center;">-19.2%<svg width="2.6" height="5" viewBox="0 0 2.6 5" style="margin-left:3.2px;vertical-align:0px"><path d="M1.3 5 L2.6 3 L1.8 3 L1.8 0 L0.8 0 L0.8 3 L0 3 Z" fill="#ff8a00"/></svg></div>
<div class="t" style="top:195.42px;height:20px;line-height:20px;font-size:8.5px;color:#666;letter-spacing:0.1px;left:522.30px;width:300px;text-align:center;">-50.3%<svg width="2.6" height="5" viewBox="0 0 2.6 5" style="margin-left:3.2px;vertical-align:0px"><path d="M1.3 5 L2.6 3 L1.8 3 L1.8 0 L0.8 0 L0.8 3 L0 3 Z" fill="#ff8a00"/></svg></div>
<div class="t" style="top:195.42px;height:20px;line-height:20px;font-size:8.5px;color:#666;letter-spacing:0.1px;left:733.20px;width:300px;text-align:center;">-52.2%<svg width="2.6" height="5" viewBox="0 0 2.6 5" style="margin-left:3.2px;vertical-align:0px"><path d="M1.3 5 L2.6 3 L1.8 3 L1.8 0 L0.8 0 L0.8 3 L0 3 Z" fill="#ff8a00"/></svg></div>
<div class="t" style="top:195.42px;height:20px;line-height:20px;font-size:8.5px;color:#666;letter-spacing:0.1px;left:839.00px;width:300px;text-align:center;">-40.8%<svg width="2.6" height="5" viewBox="0 0 2.6 5" style="margin-left:3.2px;vertical-align:0px"><path d="M1.3 5 L2.6 3 L1.8 3 L1.8 0 L0.8 0 L0.8 3 L0 3 Z" fill="#ff8a00"/></svg></div>
<div class="t" style="top:195.42px;height:20px;line-height:20px;font-size:8.5px;color:#464646;letter-spacing:0.1px;left:576.00px;width:300px;text-align:center;">66.3%</div>
<div class="t" style="top:195.42px;height:20px;line-height:20px;font-size:8.5px;color:#4a4a4a;letter-spacing:0.25px;left:629.00px;width:300px;text-align:center;">00:02:52</div>
<div class="t" style="top:195.42px;height:20px;line-height:20px;font-size:8.5px;color:#464646;letter-spacing:0.1px;left:787.00px;width:300px;text-align:center;">125.9%</div>
<div class="r" style="left:699.50px;top:214.66px;width:52.80px;height:17.14px;background:#9ed9f6;"></div>
<div class="r" style="left:752.30px;top:214.66px;width:52.80px;height:17.14px;background:#c0e6f9;"></div>
<div class="r" style="left:910.70px;top:214.66px;width:52.80px;height:17.14px;background:#f190b2;"></div>
<div class="t" style="top:212.51px;height:20px;line-height:20px;font-size:8.5px;color:#666;letter-spacing:0.1px;left:148.30px;">Jan2023_LunarNY_V1</div>
<div class="t" style="top:212.51px;height:20px;line-height:20px;font-size:8.5px;color:#666;letter-spacing:0.1px;right:713.00px;margin-right:-0.1px;">1,074</div>
<div class="r" style="left:313.00px;top:218.66px;width:0.80px;height:7.80px;background:#d6d6d6;opacity:0.55;"></div>
<div class="t" style="top:212.51px;height:20px;line-height:20px;font-size:8.5px;color:#666;letter-spacing:0.1px;right:607.40px;margin-right:-0.1px;">388</div>
<div class="r" style="left:418.20px;top:218.66px;width:0.80px;height:7.80px;background:#b3b3b3;opacity:0.55;"></div>
<div class="t" style="top:212.51px;height:20px;line-height:20px;font-size:8.5px;color:#666;letter-spacing:0.1px;right:502.00px;margin-right:-0.1px;">1,724</div>
<div class="r" style="left:524.00px;top:218.66px;width:0.80px;height:7.80px;background:#1372c2;opacity:0.55;"></div>
<div class="t" style="top:212.51px;height:20px;line-height:20px;font-size:8.5px;color:#666;letter-spacing:0.1px;right:391.30px;margin-right:-0.1px;">9,038</div>
<div class="r" style="left:634.70px;top:218.66px;width:0.80px;height:7.80px;background:#39b3ef;opacity:0.55;"></div>
<div class="t" style="top:212.51px;height:20px;line-height:20px;font-size:8.5px;color:#666;letter-spacing:0.1px;right:185.40px;margin-right:-0.1px;">2,972</div>
<div class="r" style="left:840.20px;top:218.66px;width:1.06px;height:7.80px;background:#f18db1;"></div>
<div class="t" style="top:212.51px;height:20px;line-height:20px;font-size:8.5px;color:#666;letter-spacing:0.1px;left:205.50px;width:300px;text-align:center;">-</div>
<div class="t" style="top:212.51px;height:20px;line-height:20px;font-size:8.5px;color:#666;letter-spacing:0.1px;left:311.00px;width:300px;text-align:center;">-</div>
<div class="t" style="top:212.51px;height:20px;line-height:20px;font-size:8.5px;color:#666;letter-spacing:0.1px;left:416.50px;width:300px;text-align:center;">-</div>
<div class="t" style="top:212.51px;height:20px;line-height:20px;font-size:8.5px;color:#666;letter-spacing:0.1px;left:522.30px;width:300px;text-align:center;">-</div>
<div class="t" style="top:212.51px;height:20px;line-height:20px;font-size:8.5px;color:#666;letter-spacing:0.1px;left:733.20px;width:300px;text-align:center;">-</div>
<div class="t" style="top:212.51px;height:20px;line-height:20px;font-size:8.5px;color:#666;letter-spacing:0.1px;left:839.00px;width:300px;text-align:center;">-</div>
<div class="t" style="top:212.51px;height:20px;line-height:20px;font-size:8.5px;color:#464646;letter-spacing:0.1px;left:576.00px;width:300px;text-align:center;">74.2%</div>
<div class="t" style="top:212.51px;height:20px;line-height:20px;font-size:8.5px;color:#4a4a4a;letter-spacing:0.25px;left:629.00px;width:300px;text-align:center;">00:03:22</div>
<div class="t" style="top:212.51px;height:20px;line-height:20px;font-size:8.5px;color:#464646;letter-spacing:0.1px;left:787.00px;width:300px;text-align:center;">172.4%</div>
<div class="r" style="left:699.50px;top:231.76px;width:52.80px;height:17.14px;background:#a0daf6;"></div>
<div class="r" style="left:752.30px;top:231.76px;width:52.80px;height:17.14px;background:#a2daf6;"></div>
<div class="r" style="left:910.70px;top:231.76px;width:52.80px;height:17.14px;background:#f18eb1;"></div>
<div class="t" style="top:229.61px;height:20px;line-height:20px;font-size:8.5px;color:#666;letter-spacing:0.1px;left:148.30px;">Nov2023_CyberMonday_V1</div>
<div class="t" style="top:229.61px;height:20px;line-height:20px;font-size:8.5px;color:#666;letter-spacing:0.1px;right:713.00px;margin-right:-0.1px;">345</div>
<div class="r" style="left:313.00px;top:235.76px;width:0.80px;height:7.80px;background:#d6d6d6;opacity:0.55;"></div>
<div class="t" style="top:229.61px;height:20px;line-height:20px;font-size:8.5px;color:#666;letter-spacing:0.1px;right:607.40px;margin-right:-0.1px;">21</div>
<div class="r" style="left:418.20px;top:235.76px;width:0.80px;height:7.80px;background:#b3b3b3;opacity:0.55;"></div>
<div class="t" style="top:229.61px;height:20px;line-height:20px;font-size:8.5px;color:#666;letter-spacing:0.1px;right:502.00px;margin-right:-0.1px;">780</div>
<div class="r" style="left:524.00px;top:235.76px;width:0.80px;height:7.80px;background:#1372c2;opacity:0.55;"></div>
<div class="t" style="top:229.61px;height:20px;line-height:20px;font-size:8.5px;color:#666;letter-spacing:0.1px;right:391.30px;margin-right:-0.1px;">5,302</div>
<div class="r" style="left:634.70px;top:235.76px;width:0.80px;height:7.80px;background:#39b3ef;opacity:0.55;"></div>
<div class="t" style="top:229.61px;height:20px;line-height:20px;font-size:8.5px;color:#666;letter-spacing:0.1px;right:185.40px;margin-right:-0.1px;">1,370</div>
<div class="r" style="left:840.20px;top:235.76px;width:0.80px;height:7.80px;background:#f18db1;opacity:0.55;"></div>
<div class="t" style="top:229.61px;height:20px;line-height:20px;font-size:8.5px;color:#666;letter-spacing:0.1px;left:205.50px;width:300px;text-align:center;">-84.4%<svg width="2.6" height="5" viewBox="0 0 2.6 5" style="margin-left:3.2px;vertical-align:0px"><path d="M1.3 5 L2.6 3 L1.8 3 L1.8 0 L0.8 0 L0.8 3 L0 3 Z" fill="#ff8a00"/></svg></div>
<div class="t" style="top:229.61px;height:20px;line-height:20px;font-size:8.5px;color:#666;letter-spacing:0.1px;left:311.00px;width:300px;text-align:center;">-97.8%<svg width="2.6" height="5" viewBox="0 0 2.6 5" style="margin-left:3.2px;vertical-align:0px"><path d="M1.3 5 L2.6 3 L1.8 3 L1.8 0 L0.8 0 L0.8 3 L0 3 Z" fill="#ff8a00"/></svg></div>
<div class="t" style="top:229.61px;height:20px;line-height:20px;font-size:8.5px;color:#666;letter-spacing:0.1px;left:416.50px;width:300px;text-align:center;">-75.6%<svg width="2.6" height="5" viewBox="0 0 2.6 5" style="margin-left:3.2px;vertical-align:0px"><path d="M1.3 5 L2.6 3 L1.8 3 L1.8 0 L0.8 0 L0.8 3 L0 3 Z" fill="#ff8a00"/></svg></div>
<div class="t" style="top:229.61px;height:20px;line-height:20px;font-size:8.5px;color:#666;letter-spacing:0.1px;left:522.30px;width:300px;text-align:center;">-75.9%<svg width="2.6" height="5" viewBox="0 0 2.6 5" style="margin-left:3.2px;vertical-align:0px"><path d="M1.3 5 L2.6 3 L1.8 3 L1.8 0 L0.8 0 L0.8 3 L0 3 Z" fill="#ff8a00"/></svg></div>
<div class="t" style="top:229.61px;height:20px;line-height:20px;font-size:8.5px;color:#666;letter-spacing:0.1px;left:733.20px;width:300px;text-align:center;">-87.8%<svg width="2.6" height="5" viewBox="0 0 2.6 5" style="margin-left:3.2px;vertical-align:0px"><path d="M1.3 5 L2.6 3 L1.8 3 L1.8 0 L0.8 0 L0.8 3 L0 3 Z" fill="#ff8a00"/></svg></div>
<div class="t" style="top:229.61px;height:20px;line-height:20px;font-size:8.5px;color:#666;letter-spacing:0.1px;left:839.00px;width:300px;text-align:center;">-50.1%<svg width="2.6" height="5" viewBox="0 0 2.6 5" style="margin-left:3.2px;vertical-align:0px"><path d="M1.3 5 L2.6 3 L1.8 3 L1.8 0 L0.8 0 L0.8 3 L0 3 Z" fill="#ff8a00"/></svg></div>
<div class="t" style="top:229.61px;height:20px;line-height:20px;font-size:8.5px;color:#464646;letter-spacing:0.1px;left:576.00px;width:300px;text-align:center;">72.7%</div>
<div class="t" style="top:229.61px;height:20px;line-height:20px;font-size:8.5px;color:#4a4a4a;letter-spacing:0.25px;left:629.00px;width:300px;text-align:center;">00:05:09</div>
<div class="t" style="top:229.61px;height:20px;line-height:20px;font-size:8.5px;color:#464646;letter-spacing:0.1px;left:787.00px;width:300px;text-align:center;">175.6%</div>
<div class="r" style="left:699.50px;top:248.85px;width:52.80px;height:17.14px;background:#d0edfb;"></div>
<div class="r" style="left:752.30px;top:248.85px;width:52.80px;height:17.14px;background:#f3fafe;"></div>
<div class="r" style="left:910.70px;top:248.85px;width:52.80px;height:17.14px;background:#fbdfea;"></div>
<div class="t" style="top:246.70px;height:20px;line-height:20px;font-size:8.5px;color:#666;letter-spacing:0.1px;left:148.30px;">1009693 | Google Analytics D...</div>
<div class="t" style="top:246.70px;height:20px;line-height:20px;font-size:8.5px;color:#666;letter-spacing:0.1px;right:713.00px;margin-right:-0.1px;">565</div>
<div class="r" style="left:313.00px;top:252.85px;width:0.80px;height:7.80px;background:#d6d6d6;opacity:0.55;"></div>
<div class="t" style="top:246.70px;height:20px;line-height:20px;font-size:8.5px;color:#666;letter-spacing:0.1px;right:607.40px;margin-right:-0.1px;">461</div>
<div class="r" style="left:418.20px;top:252.85px;width:0.80px;height:7.80px;background:#b3b3b3;opacity:0.55;"></div>
<div class="t" style="top:246.70px;height:20px;line-height:20px;font-size:8.5px;color:#666;letter-spacing:0.1px;right:502.00px;margin-right:-0.1px;">634</div>
<div class="r" style="left:524.00px;top:252.85px;width:0.80px;height:7.80px;background:#1372c2;opacity:0.55;"></div>
<div class="t" style="top:246.70px;height:20px;line-height:20px;font-size:8.5px;color:#666;letter-spacing:0.1px;right:391.30px;margin-right:-0.1px;">960</div>
<div class="r" style="left:634.70px;top:252.85px;width:0.80px;height:7.80px;background:#39b3ef;opacity:0.55;"></div>
<div class="t" style="top:246.70px;height:20px;line-height:20px;font-size:8.5px;color:#666;letter-spacing:0.1px;right:185.40px;margin-right:-0.1px;">213</div>
<div class="r" style="left:840.20px;top:252.85px;width:0.80px;height:7.80px;background:#f18db1;opacity:0.55;"></div>
<div class="t" style="top:246.70px;height:20px;line-height:20px;font-size:8.5px;color:#666;letter-spacing:0.1px;left:205.50px;width:300px;text-align:center;">97.6%<svg width="2.6" height="5" viewBox="0 0 2.6 5" style="margin-left:3.2px;vertical-align:0px"><path d="M1.3 0 L2.6 2 L1.8 2 L1.8 5 L0.8 5 L0.8 2 L0 2 Z" fill="#5aae2e"/></svg></div>
<div class="t" style="top:246.70px;height:20px;line-height:20px;font-size:8.5px;color:#666;letter-spacing:0.1px;left:311.00px;width:300px;text-align:center;">92.1%<svg width="2.6" height="5" viewBox="0 0 2.6 5" style="margin-left:3.2px;vertical-align:0px"><path d="M1.3 0 L2.6 2 L1.8 2 L1.8 5 L0.8 5 L0.8 2 L0 2 Z" fill="#5aae2e"/></svg></div>
<div class="t" style="top:246.70px;height:20px;line-height:20px;font-size:8.5px;color:#666;letter-spacing:0.1px;left:416.50px;width:300px;text-align:center;">107.9%<svg width="2.6" height="5" viewBox="0 0 2.6 5" style="margin-left:3.2px;vertical-align:0px"><path d="M1.3 0 L2.6 2 L1.8 2 L1.8 5 L0.8 5 L0.8 2 L0 2 Z" fill="#5aae2e"/></svg></div>
<div class="t" style="top:246.70px;height:20px;line-height:20px;font-size:8.5px;color:#666;letter-spacing:0.1px;left:522.30px;width:300px;text-align:center;">-13.0%<svg width="2.6" height="5" viewBox="0 0 2.6 5" style="margin-left:3.2px;vertical-align:0px"><path d="M1.3 5 L2.6 3 L1.8 3 L1.8 0 L0.8 0 L0.8 3 L0 3 Z" fill="#ff8a00"/></svg></div>
<div class="t" style="top:246.70px;height:20px;line-height:20px;font-size:8.5px;color:#666;letter-spacing:0.1px;left:733.20px;width:300px;text-align:center;">-36.2%<svg width="2.6" height="5" viewBox="0 0 2.6 5" style="margin-left:3.2px;vertical-align:0px"><path d="M1.3 5 L2.6 3 L1.8 3 L1.8 0 L0.8 0 L0.8 3 L0 3 Z" fill="#ff8a00"/></svg></div>
<div class="t" style="top:246.70px;height:20px;line-height:20px;font-size:8.5px;color:#666;letter-spacing:0.1px;left:839.00px;width:300px;text-align:center;">-69.3%<svg width="2.6" height="5" viewBox="0 0 2.6 5" style="margin-left:3.2px;vertical-align:0px"><path d="M1.3 5 L2.6 3 L1.8 3 L1.8 0 L0.8 0 L0.8 3 L0 3 Z" fill="#ff8a00"/></svg></div>
<div class="t" style="top:246.70px;height:20px;line-height:20px;font-size:8.5px;color:#464646;letter-spacing:0.1px;left:576.00px;width:300px;text-align:center;">35.0%</div>
<div class="t" style="top:246.70px;height:20px;line-height:20px;font-size:8.5px;color:#4a4a4a;letter-spacing:0.25px;left:629.00px;width:300px;text-align:center;">00:00:19</div>
<div class="t" style="top:246.70px;height:20px;line-height:20px;font-size:8.5px;color:#464646;letter-spacing:0.1px;left:787.00px;width:300px;text-align:center;">33.6%</div>
<div class="r" style="left:699.50px;top:265.95px;width:52.80px;height:17.14px;background:#94d5f5;"></div>
<div class="r" style="left:752.30px;top:265.95px;width:52.80px;height:17.14px;background:#d8f0fb;"></div>
<div class="r" style="left:910.70px;top:265.95px;width:52.80px;height:17.14px;background:#ef7ba4;"></div>
<div class="t" style="top:263.80px;height:20px;line-height:20px;font-size:8.5px;color:#666;letter-spacing:0.1px;left:148.30px;">Dec2023_HolidayShip_V1</div>
<div class="t" style="top:263.80px;height:20px;line-height:20px;font-size:8.5px;color:#666;letter-spacing:0.1px;right:713.00px;margin-right:-0.1px;">148</div>
<div class="r" style="left:313.00px;top:269.95px;width:0.80px;height:7.80px;background:#d6d6d6;opacity:0.55;"></div>
<div class="t" style="top:263.80px;height:20px;line-height:20px;font-size:8.5px;color:#666;letter-spacing:0.1px;right:607.40px;margin-right:-0.1px;">46</div>
<div class="r" style="left:418.20px;top:269.95px;width:0.80px;height:7.80px;background:#b3b3b3;opacity:0.55;"></div>
<div class="t" style="top:263.80px;height:20px;line-height:20px;font-size:8.5px;color:#666;letter-spacing:0.1px;right:502.00px;margin-right:-0.1px;">209</div>
<div class="r" style="left:524.00px;top:269.95px;width:0.80px;height:7.80px;background:#1372c2;opacity:0.55;"></div>
<div class="t" style="top:263.80px;height:20px;line-height:20px;font-size:8.5px;color:#666;letter-spacing:0.1px;right:391.30px;margin-right:-0.1px;">943</div>
<div class="r" style="left:634.70px;top:269.95px;width:0.80px;height:7.80px;background:#39b3ef;opacity:0.55;"></div>
<div class="t" style="top:263.80px;height:20px;line-height:20px;font-size:8.5px;color:#666;letter-spacing:0.1px;right:185.40px;margin-right:-0.1px;">435</div>
<div class="r" style="left:840.20px;top:269.95px;width:0.80px;height:7.80px;background:#f18db1;opacity:0.55;"></div>
<div class="t" style="top:263.80px;height:20px;line-height:20px;font-size:8.5px;color:#666;letter-spacing:0.1px;left:205.50px;width:300px;text-align:center;">-</div>
<div class="t" style="top:263.80px;height:20px;line-height:20px;font-size:8.5px;color:#666;letter-spacing:0.1px;left:311.00px;width:300px;text-align:center;">-</div>
<div class="t" style="top:263.80px;height:20px;line-height:20px;font-size:8.5px;color:#666;letter-spacing:0.1px;left:416.50px;width:300px;text-align:center;">-</div>
<div class="t" style="top:263.80px;height:20px;line-height:20px;font-size:8.5px;color:#666;letter-spacing:0.1px;left:522.30px;width:300px;text-align:center;">-</div>
<div class="t" style="top:263.80px;height:20px;line-height:20px;font-size:8.5px;color:#666;letter-spacing:0.1px;left:733.20px;width:300px;text-align:center;">-</div>
<div class="t" style="top:263.80px;height:20px;line-height:20px;font-size:8.5px;color:#666;letter-spacing:0.1px;left:839.00px;width:300px;text-align:center;">-</div>
<div class="t" style="top:263.80px;height:20px;line-height:20px;font-size:8.5px;color:#464646;letter-spacing:0.1px;left:576.00px;width:300px;text-align:center;">81.8%</div>
<div class="t" style="top:263.80px;height:20px;line-height:20px;font-size:8.5px;color:#4a4a4a;letter-spacing:0.25px;left:629.00px;width:300px;text-align:center;">00:01:53</div>
<div class="t" style="top:263.80px;height:20px;line-height:20px;font-size:8.5px;color:#464646;letter-spacing:0.1px;left:787.00px;width:300px;text-align:center;">208.1%</div>
<div class="r" style="left:699.50px;top:283.04px;width:52.80px;height:17.14px;background:#93d5f5;"></div>
<div class="r" style="left:752.30px;top:283.04px;width:52.80px;height:17.14px;background:#b2e1f8;"></div>
<div class="r" style="left:910.70px;top:283.04px;width:52.80px;height:17.14px;background:#ef78a1;"></div>
<div class="t" style="top:280.89px;height:20px;line-height:20px;font-size:8.5px;color:#666;letter-spacing:0.1px;left:148.30px;">Nov2023_Holiday_V1</div>
<div class="t" style="top:280.89px;height:20px;line-height:20px;font-size:8.5px;color:#666;letter-spacing:0.1px;right:713.00px;margin-right:-0.1px;">106</div>
<div class="r" style="left:313.00px;top:287.04px;width:0.80px;height:7.80px;background:#d6d6d6;opacity:0.55;"></div>
<div class="t" style="top:280.89px;height:20px;line-height:20px;font-size:8.5px;color:#666;letter-spacing:0.1px;right:607.40px;margin-right:-0.1px;">1</div>
<div class="r" style="left:418.20px;top:287.04px;width:0.80px;height:7.80px;background:#b3b3b3;opacity:0.55;"></div>
<div class="t" style="top:280.89px;height:20px;line-height:20px;font-size:8.5px;color:#666;letter-spacing:0.1px;right:502.00px;margin-right:-0.1px;">200</div>
<div class="r" style="left:524.00px;top:287.04px;width:0.80px;height:7.80px;background:#1372c2;opacity:0.55;"></div>
<div class="t" style="top:280.89px;height:20px;line-height:20px;font-size:8.5px;color:#666;letter-spacing:0.1px;right:391.30px;margin-right:-0.1px;">1,394</div>
<div class="r" style="left:634.70px;top:287.04px;width:0.80px;height:7.80px;background:#39b3ef;opacity:0.55;"></div>
<div class="t" style="top:280.89px;height:20px;line-height:20px;font-size:8.5px;color:#666;letter-spacing:0.1px;right:185.40px;margin-right:-0.1px;">427</div>
<div class="r" style="left:840.20px;top:287.04px;width:0.80px;height:7.80px;background:#f18db1;opacity:0.55;"></div>
<div class="t" style="top:280.89px;height:20px;line-height:20px;font-size:8.5px;color:#666;letter-spacing:0.1px;left:205.50px;width:300px;text-align:center;">-91.4%<svg width="2.6" height="5" viewBox="0 0 2.6 5" style="margin-left:3.2px;vertical-align:0px"><path d="M1.3 5 L2.6 3 L1.8 3 L1.8 0 L0.8 0 L0.8 3 L0 3 Z" fill="#ff8a00"/></svg></div>
<div class="t" style="top:280.89px;height:20px;line-height:20px;font-size:8.5px;color:#666;letter-spacing:0.1px;left:311.00px;width:300px;text-align:center;">-99.8%<svg width="2.6" height="5" viewBox="0 0 2.6 5" style="margin-left:3.2px;vertical-align:0px"><path d="M1.3 5 L2.6 3 L1.8 3 L1.8 0 L0.8 0 L0.8 3 L0 3 Z" fill="#ff8a00"/></svg></div>
<div class="t" style="top:280.89px;height:20px;line-height:20px;font-size:8.5px;color:#666;letter-spacing:0.1px;left:416.50px;width:300px;text-align:center;">-90.6%<svg width="2.6" height="5" viewBox="0 0 2.6 5" style="margin-left:3.2px;vertical-align:0px"><path d="M1.3 5 L2.6 3 L1.8 3 L1.8 0 L0.8 0 L0.8 3 L0 3 Z" fill="#ff8a00"/></svg></div>
<div class="t" style="top:280.89px;height:20px;line-height:20px;font-size:8.5px;color:#666;letter-spacing:0.1px;left:522.30px;width:300px;text-align:center;">-93.1%<svg width="2.6" height="5" viewBox="0 0 2.6 5" style="margin-left:3.2px;vertical-align:0px"><path d="M1.3 5 L2.6 3 L1.8 3 L1.8 0 L0.8 0 L0.8 3 L0 3 Z" fill="#ff8a00"/></svg></div>
<div class="t" style="top:280.89px;height:20px;line-height:20px;font-size:8.5px;color:#666;letter-spacing:0.1px;left:733.20px;width:300px;text-align:center;">-91.5%<svg width="2.6" height="5" viewBox="0 0 2.6 5" style="margin-left:3.2px;vertical-align:0px"><path d="M1.3 5 L2.6 3 L1.8 3 L1.8 0 L0.8 0 L0.8 3 L0 3 Z" fill="#ff8a00"/></svg></div>
<div class="t" style="top:280.89px;height:20px;line-height:20px;font-size:8.5px;color:#666;letter-spacing:0.1px;left:839.00px;width:300px;text-align:center;">-9.9%<svg width="2.6" height="5" viewBox="0 0 2.6 5" style="margin-left:3.2px;vertical-align:0px"><path d="M1.3 5 L2.6 3 L1.8 3 L1.8 0 L0.8 0 L0.8 3 L0 3 Z" fill="#ff8a00"/></svg></div>
<div class="t" style="top:280.89px;height:20px;line-height:20px;font-size:8.5px;color:#464646;letter-spacing:0.1px;left:576.00px;width:300px;text-align:center;">83.0%</div>
<div class="t" style="top:280.89px;height:20px;line-height:20px;font-size:8.5px;color:#4a4a4a;letter-spacing:0.25px;left:629.00px;width:300px;text-align:center;">00:04:10</div>
<div class="t" style="top:280.89px;height:20px;line-height:20px;font-size:8.5px;color:#464646;letter-spacing:0.1px;left:787.00px;width:300px;text-align:center;">213.5%</div>
<div class="r" style="left:699.50px;top:300.14px;width:52.80px;height:17.14px;background:#c0e6f9;"></div>
<div class="r" style="left:752.30px;top:300.14px;width:52.80px;height:17.14px;background:#f7fbfe;"></div>
<div class="r" style="left:910.70px;top:300.14px;width:52.80px;height:17.14px;background:#fce8f0;"></div>
<div class="t" style="top:297.99px;height:20px;line-height:20px;font-size:8.5px;color:#666;letter-spacing:0.1px;left:148.30px;">Merch Shop | Display &amp; Video ...</div>
<div class="t" style="top:297.99px;height:20px;line-height:20px;font-size:8.5px;color:#666;letter-spacing:0.1px;right:713.00px;margin-right:-0.1px;">82</div>
<div class="r" style="left:313.00px;top:304.14px;width:0.80px;height:7.80px;background:#d6d6d6;opacity:0.55;"></div>
<div class="t" style="top:297.99px;height:20px;line-height:20px;font-size:8.5px;color:#666;letter-spacing:0.1px;right:607.40px;margin-right:-0.1px;">65</div>
<div class="r" style="left:418.20px;top:304.14px;width:0.80px;height:7.80px;background:#b3b3b3;opacity:0.55;"></div>
<div class="t" style="top:297.99px;height:20px;line-height:20px;font-size:8.5px;color:#666;letter-spacing:0.1px;right:502.00px;margin-right:-0.1px;">175</div>
<div class="r" style="left:524.00px;top:304.14px;width:0.80px;height:7.80px;background:#1372c2;opacity:0.55;"></div>
<div class="t" style="top:297.99px;height:20px;line-height:20px;font-size:8.5px;color:#666;letter-spacing:0.1px;right:391.30px;margin-right:-0.1px;">281</div>
<div class="r" style="left:634.70px;top:304.14px;width:0.80px;height:7.80px;background:#39b3ef;opacity:0.55;"></div>
<div class="t" style="top:297.99px;height:20px;line-height:20px;font-size:8.5px;color:#666;letter-spacing:0.1px;right:185.40px;margin-right:-0.1px;">30</div>
<div class="r" style="left:840.20px;top:304.14px;width:0.80px;height:7.80px;background:#f18db1;opacity:0.55;"></div>
<div class="t" style="top:297.99px;height:20px;line-height:20px;font-size:8.5px;color:#666;letter-spacing:0.1px;left:205.50px;width:300px;text-align:center;">192.9%<svg width="2.6" height="5" viewBox="0 0 2.6 5" style="margin-left:3.2px;vertical-align:0px"><path d="M1.3 0 L2.6 2 L1.8 2 L1.8 5 L0.8 5 L0.8 2 L0 2 Z" fill="#5aae2e"/></svg></div>
<div class="t" style="top:297.99px;height:20px;line-height:20px;font-size:8.5px;color:#666;letter-spacing:0.1px;left:311.00px;width:300px;text-align:center;">109.7%<svg width="2.6" height="5" viewBox="0 0 2.6 5" style="margin-left:3.2px;vertical-align:0px"><path d="M1.3 0 L2.6 2 L1.8 2 L1.8 5 L0.8 5 L0.8 2 L0 2 Z" fill="#5aae2e"/></svg></div>
<div class="t" style="top:297.99px;height:20px;line-height:20px;font-size:8.5px;color:#666;letter-spacing:0.1px;left:416.50px;width:300px;text-align:center;">348.7%<svg width="2.6" height="5" viewBox="0 0 2.6 5" style="margin-left:3.2px;vertical-align:0px"><path d="M1.3 0 L2.6 2 L1.8 2 L1.8 5 L0.8 5 L0.8 2 L0 2 Z" fill="#5aae2e"/></svg></div>
<div class="t" style="top:297.99px;height:20px;line-height:20px;font-size:8.5px;color:#666;letter-spacing:0.1px;left:522.30px;width:300px;text-align:center;">234.5%<svg width="2.6" height="5" viewBox="0 0 2.6 5" style="margin-left:3.2px;vertical-align:0px"><path d="M1.3 0 L2.6 2 L1.8 2 L1.8 5 L0.8 5 L0.8 2 L0 2 Z" fill="#5aae2e"/></svg></div>
<div class="t" style="top:297.99px;height:20px;line-height:20px;font-size:8.5px;color:#666;letter-spacing:0.1px;left:733.20px;width:300px;text-align:center;">-3.2%<svg width="2.6" height="5" viewBox="0 0 2.6 5" style="margin-left:3.2px;vertical-align:0px"><path d="M1.3 5 L2.6 3 L1.8 3 L1.8 0 L0.8 0 L0.8 3 L0 3 Z" fill="#ff8a00"/></svg></div>
<div class="t" style="top:297.99px;height:20px;line-height:20px;font-size:8.5px;color:#666;letter-spacing:0.1px;left:839.00px;width:300px;text-align:center;">-78.4%<svg width="2.6" height="5" viewBox="0 0 2.6 5" style="margin-left:3.2px;vertical-align:0px"><path d="M1.3 5 L2.6 3 L1.8 3 L1.8 0 L0.8 0 L0.8 3 L0 3 Z" fill="#ff8a00"/></svg></div>
<div class="t" style="top:297.99px;height:20px;line-height:20px;font-size:8.5px;color:#464646;letter-spacing:0.1px;left:576.00px;width:300px;text-align:center;">48.0%</div>
<div class="t" style="top:297.99px;height:20px;line-height:20px;font-size:8.5px;color:#4a4a4a;letter-spacing:0.25px;left:629.00px;width:300px;text-align:center;">00:00:05</div>
<div class="t" style="top:297.99px;height:20px;line-height:20px;font-size:8.5px;color:#464646;letter-spacing:0.1px;left:787.00px;width:300px;text-align:center;">17.1%</div>
<div class="r" style="left:699.50px;top:317.24px;width:52.80px;height:17.14px;background:#a0daf6;"></div>
<div class="r" style="left:752.30px;top:317.24px;width:52.80px;height:17.14px;background:#e9f6fd;"></div>
<div class="r" style="left:910.70px;top:317.24px;width:52.80px;height:17.14px;background:#fad5e3;"></div>
<div class="t" style="top:315.08px;height:20px;line-height:20px;font-size:8.5px;color:#666;letter-spacing:0.1px;left:148.30px;">Data Share Promo</div>
<div class="t" style="top:315.08px;height:20px;line-height:20px;font-size:8.5px;color:#666;letter-spacing:0.1px;right:713.00px;margin-right:-0.1px;">98</div>
<div class="r" style="left:313.00px;top:321.24px;width:0.80px;height:7.80px;background:#d6d6d6;opacity:0.55;"></div>
<div class="t" style="top:315.08px;height:20px;line-height:20px;font-size:8.5px;color:#666;letter-spacing:0.1px;right:607.40px;margin-right:-0.1px;">86</div>
<div class="r" style="left:418.20px;top:321.24px;width:0.80px;height:7.80px;background:#b3b3b3;opacity:0.55;"></div>
<div class="t" style="top:315.08px;height:20px;line-height:20px;font-size:8.5px;color:#666;letter-spacing:0.1px;right:502.00px;margin-right:-0.1px;">134</div>
<div class="r" style="left:524.00px;top:321.24px;width:0.80px;height:7.80px;background:#1372c2;opacity:0.55;"></div>
<div class="t" style="top:315.08px;height:20px;line-height:20px;font-size:8.5px;color:#666;letter-spacing:0.1px;right:391.30px;margin-right:-0.1px;">206</div>
<div class="r" style="left:634.70px;top:321.24px;width:0.80px;height:7.80px;background:#39b3ef;opacity:0.55;"></div>
<div class="t" style="top:315.08px;height:20px;line-height:20px;font-size:8.5px;color:#666;letter-spacing:0.1px;right:185.40px;margin-right:-0.1px;">68</div>
<div class="r" style="left:840.20px;top:321.24px;width:0.80px;height:7.80px;background:#f18db1;opacity:0.55;"></div>
<div class="t" style="top:315.08px;height:20px;line-height:20px;font-size:8.5px;color:#666;letter-spacing:0.1px;left:205.50px;width:300px;text-align:center;">3.2%<svg width="2.6" height="5" viewBox="0 0 2.6 5" style="margin-left:3.2px;vertical-align:0px"><path d="M1.3 0 L2.6 2 L1.8 2 L1.8 5 L0.8 5 L0.8 2 L0 2 Z" fill="#5aae2e"/></svg></div>
<div class="t" style="top:315.08px;height:20px;line-height:20px;font-size:8.5px;color:#666;letter-spacing:0.1px;left:311.00px;width:300px;text-align:center;">4.9%<svg width="2.6" height="5" viewBox="0 0 2.6 5" style="margin-left:3.2px;vertical-align:0px"><path d="M1.3 0 L2.6 2 L1.8 2 L1.8 5 L0.8 5 L0.8 2 L0 2 Z" fill="#5aae2e"/></svg></div>
<div class="t" style="top:315.08px;height:20px;line-height:20px;font-size:8.5px;color:#666;letter-spacing:0.1px;left:416.50px;width:300px;text-align:center;">-5.0%<svg width="2.6" height="5" viewBox="0 0 2.6 5" style="margin-left:3.2px;vertical-align:0px"><path d="M1.3 5 L2.6 3 L1.8 3 L1.8 0 L0.8 0 L0.8 3 L0 3 Z" fill="#ff8a00"/></svg></div>
<div class="t" style="top:315.08px;height:20px;line-height:20px;font-size:8.5px;color:#666;letter-spacing:0.1px;left:522.30px;width:300px;text-align:center;">-55.9%<svg width="2.6" height="5" viewBox="0 0 2.6 5" style="margin-left:3.2px;vertical-align:0px"><path d="M1.3 5 L2.6 3 L1.8 3 L1.8 0 L0.8 0 L0.8 3 L0 3 Z" fill="#ff8a00"/></svg></div>
<div class="t" style="top:315.08px;height:20px;line-height:20px;font-size:8.5px;color:#666;letter-spacing:0.1px;left:733.20px;width:300px;text-align:center;">-32.7%<svg width="2.6" height="5" viewBox="0 0 2.6 5" style="margin-left:3.2px;vertical-align:0px"><path d="M1.3 5 L2.6 3 L1.8 3 L1.8 0 L0.8 0 L0.8 3 L0 3 Z" fill="#ff8a00"/></svg></div>
<div class="t" style="top:315.08px;height:20px;line-height:20px;font-size:8.5px;color:#666;letter-spacing:0.1px;left:839.00px;width:300px;text-align:center;">-29.2%<svg width="2.6" height="5" viewBox="0 0 2.6 5" style="margin-left:3.2px;vertical-align:0px"><path d="M1.3 5 L2.6 3 L1.8 3 L1.8 0 L0.8 0 L0.8 3 L0 3 Z" fill="#ff8a00"/></svg></div>
<div class="t" style="top:315.08px;height:20px;line-height:20px;font-size:8.5px;color:#464646;letter-spacing:0.1px;left:576.00px;width:300px;text-align:center;">72.4%</div>
<div class="t" style="top:315.08px;height:20px;line-height:20px;font-size:8.5px;color:#4a4a4a;letter-spacing:0.25px;left:629.00px;width:300px;text-align:center;">00:00:55</div>
<div class="t" style="top:315.08px;height:20px;line-height:20px;font-size:8.5px;color:#464646;letter-spacing:0.1px;left:787.00px;width:300px;text-align:center;">50.7%</div>
<div class="r" style="left:699.50px;top:334.33px;width:52.80px;height:17.14px;background:#8cd2f4;"></div>
<div class="r" style="left:752.30px;top:334.33px;width:52.80px;height:17.14px;background:#cbebfa;"></div>
<div class="r" style="left:910.70px;top:334.33px;width:52.80px;height:17.14px;background:#ef7aa3;"></div>
<div class="t" style="top:332.18px;height:20px;line-height:20px;font-size:8.5px;color:#666;letter-spacing:0.1px;left:148.30px;">Dec2023_HolidayShip_V2</div>
<div class="t" style="top:332.18px;height:20px;line-height:20px;font-size:8.5px;color:#666;letter-spacing:0.1px;right:713.00px;margin-right:-0.1px;">41</div>
<div class="r" style="left:313.00px;top:338.33px;width:0.80px;height:7.80px;background:#d6d6d6;opacity:0.55;"></div>
<div class="t" style="top:332.18px;height:20px;line-height:20px;font-size:8.5px;color:#666;letter-spacing:0.1px;right:607.40px;margin-right:-0.1px;">23</div>
<div class="r" style="left:418.20px;top:338.33px;width:0.80px;height:7.80px;background:#b3b3b3;opacity:0.55;"></div>
<div class="t" style="top:332.18px;height:20px;line-height:20px;font-size:8.5px;color:#666;letter-spacing:0.1px;right:502.00px;margin-right:-0.1px;">58</div>
<div class="r" style="left:524.00px;top:338.33px;width:0.80px;height:7.80px;background:#1372c2;opacity:0.55;"></div>
<div class="t" style="top:332.18px;height:20px;line-height:20px;font-size:8.5px;color:#666;letter-spacing:0.1px;right:391.30px;margin-right:-0.1px;">230</div>
<div class="r" style="left:634.70px;top:338.33px;width:0.80px;height:7.80px;background:#39b3ef;opacity:0.55;"></div>
<div class="t" style="top:332.18px;height:20px;line-height:20px;font-size:8.5px;color:#666;letter-spacing:0.1px;right:185.40px;margin-right:-0.1px;">122</div>
<div class="r" style="left:840.20px;top:338.33px;width:0.80px;height:7.80px;background:#f18db1;opacity:0.55;"></div>
<div class="t" style="top:332.18px;height:20px;line-height:20px;font-size:8.5px;color:#666;letter-spacing:0.1px;left:205.50px;width:300px;text-align:center;">-</div>
<div class="t" style="top:332.18px;height:20px;line-height:20px;font-size:8.5px;color:#666;letter-spacing:0.1px;left:311.00px;width:300px;text-align:center;">-</div>
<div class="t" style="top:332.18px;height:20px;line-height:20px;font-size:8.5px;color:#666;letter-spacing:0.1px;left:416.50px;width:300px;text-align:center;">-</div>
<div class="t" style="top:332.18px;height:20px;line-height:20px;font-size:8.5px;color:#666;letter-spacing:0.1px;left:522.30px;width:300px;text-align:center;">-</div>
<div class="t" style="top:332.18px;height:20px;line-height:20px;font-size:8.5px;color:#666;letter-spacing:0.1px;left:733.20px;width:300px;text-align:center;">-</div>
<div class="t" style="top:332.18px;height:20px;line-height:20px;font-size:8.5px;color:#666;letter-spacing:0.1px;left:839.00px;width:300px;text-align:center;">-</div>
<div class="t" style="top:332.18px;height:20px;line-height:20px;font-size:8.5px;color:#464646;letter-spacing:0.1px;left:576.00px;width:300px;text-align:center;">87.9%</div>
<div class="t" style="top:332.18px;height:20px;line-height:20px;font-size:8.5px;color:#4a4a4a;letter-spacing:0.25px;left:629.00px;width:300px;text-align:center;">00:02:40</div>
<div class="t" style="top:332.18px;height:20px;line-height:20px;font-size:8.5px;color:#464646;letter-spacing:0.1px;left:787.00px;width:300px;text-align:center;">210.3%</div>
<div class="r" style="left:699.50px;top:351.42px;width:52.80px;height:17.14px;background:#9bd8f6;"></div>
<div class="r" style="left:752.30px;top:351.42px;width:52.80px;height:17.14px;background:#d7effb;"></div>
<div class="r" style="left:910.70px;top:351.42px;width:52.80px;height:17.14px;background:#f5acc6;"></div>
<div class="t" style="top:349.27px;height:20px;line-height:20px;font-size:8.5px;color:#666;letter-spacing:0.1px;left:148.30px;">Sept2023_Global5K_V1</div>
<div class="t" style="top:349.27px;height:20px;line-height:20px;font-size:8.5px;color:#666;letter-spacing:0.1px;right:713.00px;margin-right:-0.1px;">20</div>
<div class="r" style="left:313.00px;top:355.42px;width:0.80px;height:7.80px;background:#d6d6d6;opacity:0.55;"></div>
<div class="t" style="top:349.27px;height:20px;line-height:20px;font-size:8.5px;color:#666;letter-spacing:0.1px;right:607.40px;margin-right:-0.1px;">0</div>
<div class="r" style="left:418.20px;top:355.42px;width:0.80px;height:7.80px;background:#b3b3b3;opacity:0.55;"></div>
<div class="t" style="top:349.27px;height:20px;line-height:20px;font-size:8.5px;color:#666;letter-spacing:0.1px;right:502.00px;margin-right:-0.1px;">39</div>
<div class="r" style="left:524.00px;top:355.42px;width:0.80px;height:7.80px;background:#1372c2;opacity:0.55;"></div>
<div class="t" style="top:349.27px;height:20px;line-height:20px;font-size:8.5px;color:#666;letter-spacing:0.1px;right:391.30px;margin-right:-0.1px;">174</div>
<div class="r" style="left:634.70px;top:355.42px;width:0.80px;height:7.80px;background:#39b3ef;opacity:0.55;"></div>
<div class="t" style="top:349.27px;height:20px;line-height:20px;font-size:8.5px;color:#666;letter-spacing:0.1px;right:185.40px;margin-right:-0.1px;">48</div>
<div class="r" style="left:840.20px;top:355.42px;width:0.80px;height:7.80px;background:#f18db1;opacity:0.55;"></div>
<div class="t" style="top:349.27px;height:20px;line-height:20px;font-size:8.5px;color:#666;letter-spacing:0.1px;left:205.50px;width:300px;text-align:center;">-80.0%<svg width="2.6" height="5" viewBox="0 0 2.6 5" style="margin-left:3.2px;vertical-align:0px"><path d="M1.3 5 L2.6 3 L1.8 3 L1.8 0 L0.8 0 L0.8 3 L0 3 Z" fill="#ff8a00"/></svg></div>
<div class="t" style="top:349.27px;height:20px;line-height:20px;font-size:8.5px;color:#666;letter-spacing:0.1px;left:311.00px;width:300px;text-align:center;">-100.0%<svg width="2.6" height="5" viewBox="0 0 2.6 5" style="margin-left:3.2px;vertical-align:0px"><path d="M1.3 5 L2.6 3 L1.8 3 L1.8 0 L0.8 0 L0.8 3 L0 3 Z" fill="#ff8a00"/></svg></div>
<div class="t" style="top:349.27px;height:20px;line-height:20px;font-size:8.5px;color:#666;letter-spacing:0.1px;left:416.50px;width:300px;text-align:center;">-84.2%<svg width="2.6" height="5" viewBox="0 0 2.6 5" style="margin-left:3.2px;vertical-align:0px"><path d="M1.3 5 L2.6 3 L1.8 3 L1.8 0 L0.8 0 L0.8 3 L0 3 Z" fill="#ff8a00"/></svg></div>
<div class="t" style="top:349.27px;height:20px;line-height:20px;font-size:8.5px;color:#666;letter-spacing:0.1px;left:522.30px;width:300px;text-align:center;">-94.1%<svg width="2.6" height="5" viewBox="0 0 2.6 5" style="margin-left:3.2px;vertical-align:0px"><path d="M1.3 5 L2.6 3 L1.8 3 L1.8 0 L0.8 0 L0.8 3 L0 3 Z" fill="#ff8a00"/></svg></div>
<div class="t" style="top:349.27px;height:20px;line-height:20px;font-size:8.5px;color:#666;letter-spacing:0.1px;left:733.20px;width:300px;text-align:center;">-92.4%<svg width="2.6" height="5" viewBox="0 0 2.6 5" style="margin-left:3.2px;vertical-align:0px"><path d="M1.3 5 L2.6 3 L1.8 3 L1.8 0 L0.8 0 L0.8 3 L0 3 Z" fill="#ff8a00"/></svg></div>
<div class="t" style="top:349.27px;height:20px;line-height:20px;font-size:8.5px;color:#666;letter-spacing:0.1px;left:839.00px;width:300px;text-align:center;">-51.7%<svg width="2.6" height="5" viewBox="0 0 2.6 5" style="margin-left:3.2px;vertical-align:0px"><path d="M1.3 5 L2.6 3 L1.8 3 L1.8 0 L0.8 0 L0.8 3 L0 3 Z" fill="#ff8a00"/></svg></div>
<div class="t" style="top:349.27px;height:20px;line-height:20px;font-size:8.5px;color:#464646;letter-spacing:0.1px;left:576.00px;width:300px;text-align:center;">76.9%</div>
<div class="t" style="top:349.27px;height:20px;line-height:20px;font-size:8.5px;color:#4a4a4a;letter-spacing:0.25px;left:629.00px;width:300px;text-align:center;">00:01:59</div>
<div class="t" style="top:349.27px;height:20px;line-height:20px;font-size:8.5px;color:#464646;letter-spacing:0.1px;left:787.00px;width:300px;text-align:center;">123.1%</div>
<div class="r" style="left:699.50px;top:368.52px;width:52.80px;height:17.14px;background:#9ed9f6;"></div>
<div class="r" style="left:752.30px;top:368.52px;width:52.80px;height:17.14px;background:#aedff7;"></div>
<div class="r" style="left:910.70px;top:368.52px;width:52.80px;height:17.14px;background:#f5afc8;"></div>
<div class="t" style="top:366.37px;height:20px;line-height:20px;font-size:8.5px;color:#666;letter-spacing:0.1px;left:148.30px;">Sept2023_Google25Bday_V1</div>
<div class="t" style="top:366.37px;height:20px;line-height:20px;font-size:8.5px;color:#666;letter-spacing:0.1px;right:713.00px;margin-right:-0.1px;">18</div>
<div class="r" style="left:313.00px;top:372.52px;width:0.80px;height:7.80px;background:#d6d6d6;opacity:0.55;"></div>
<div class="t" style="top:366.37px;height:20px;line-height:20px;font-size:8.5px;color:#666;letter-spacing:0.1px;right:607.40px;margin-right:-0.1px;">1</div>
<div class="r" style="left:418.20px;top:372.52px;width:0.80px;height:7.80px;background:#b3b3b3;opacity:0.55;"></div>
<div class="t" style="top:366.37px;height:20px;line-height:20px;font-size:8.5px;color:#666;letter-spacing:0.1px;right:502.00px;margin-right:-0.1px;">35</div>
<div class="r" style="left:524.00px;top:372.52px;width:0.80px;height:7.80px;background:#1372c2;opacity:0.55;"></div>
<div class="t" style="top:366.37px;height:20px;line-height:20px;font-size:8.5px;color:#666;letter-spacing:0.1px;right:391.30px;margin-right:-0.1px;">265</div>
<div class="r" style="left:634.70px;top:372.52px;width:0.80px;height:7.80px;background:#39b3ef;opacity:0.55;"></div>
<div class="t" style="top:366.37px;height:20px;line-height:20px;font-size:8.5px;color:#666;letter-spacing:0.1px;right:185.40px;margin-right:-0.1px;">41</div>
<div class="r" style="left:840.20px;top:372.52px;width:0.80px;height:7.80px;background:#f18db1;opacity:0.55;"></div>
<div class="t" style="top:366.37px;height:20px;line-height:20px;font-size:8.5px;color:#666;letter-spacing:0.1px;left:205.50px;width:300px;text-align:center;">-73.9%<svg width="2.6" height="5" viewBox="0 0 2.6 5" style="margin-left:3.2px;vertical-align:0px"><path d="M1.3 5 L2.6 3 L1.8 3 L1.8 0 L0.8 0 L0.8 3 L0 3 Z" fill="#ff8a00"/></svg></div>
<div class="t" style="top:366.37px;height:20px;line-height:20px;font-size:8.5px;color:#666;letter-spacing:0.1px;left:311.00px;width:300px;text-align:center;">-75.0%<svg width="2.6" height="5" viewBox="0 0 2.6 5" style="margin-left:3.2px;vertical-align:0px"><path d="M1.3 5 L2.6 3 L1.8 3 L1.8 0 L0.8 0 L0.8 3 L0 3 Z" fill="#ff8a00"/></svg></div>
<div class="t" style="top:366.37px;height:20px;line-height:20px;font-size:8.5px;color:#666;letter-spacing:0.1px;left:416.50px;width:300px;text-align:center;">-71.8%<svg width="2.6" height="5" viewBox="0 0 2.6 5" style="margin-left:3.2px;vertical-align:0px"><path d="M1.3 5 L2.6 3 L1.8 3 L1.8 0 L0.8 0 L0.8 3 L0 3 Z" fill="#ff8a00"/></svg></div>
<div class="t" style="top:366.37px;height:20px;line-height:20px;font-size:8.5px;color:#666;letter-spacing:0.1px;left:522.30px;width:300px;text-align:center;">-79.9%<svg width="2.6" height="5" viewBox="0 0 2.6 5" style="margin-left:3.2px;vertical-align:0px"><path d="M1.3 5 L2.6 3 L1.8 3 L1.8 0 L0.8 0 L0.8 3 L0 3 Z" fill="#ff8a00"/></svg></div>
<div class="t" style="top:366.37px;height:20px;line-height:20px;font-size:8.5px;color:#666;letter-spacing:0.1px;left:733.20px;width:300px;text-align:center;">-83.5%<svg width="2.6" height="5" viewBox="0 0 2.6 5" style="margin-left:3.2px;vertical-align:0px"><path d="M1.3 5 L2.6 3 L1.8 3 L1.8 0 L0.8 0 L0.8 3 L0 3 Z" fill="#ff8a00"/></svg></div>
<div class="t" style="top:366.37px;height:20px;line-height:20px;font-size:8.5px;color:#666;letter-spacing:0.1px;left:839.00px;width:300px;text-align:center;">-41.4%<svg width="2.6" height="5" viewBox="0 0 2.6 5" style="margin-left:3.2px;vertical-align:0px"><path d="M1.3 5 L2.6 3 L1.8 3 L1.8 0 L0.8 0 L0.8 3 L0 3 Z" fill="#ff8a00"/></svg></div>
<div class="t" style="top:366.37px;height:20px;line-height:20px;font-size:8.5px;color:#464646;letter-spacing:0.1px;left:576.00px;width:300px;text-align:center;">74.3%</div>
<div class="t" style="top:366.37px;height:20px;line-height:20px;font-size:8.5px;color:#4a4a4a;letter-spacing:0.25px;left:629.00px;width:300px;text-align:center;">00:04:24</div>
<div class="t" style="top:366.37px;height:20px;line-height:20px;font-size:8.5px;color:#464646;letter-spacing:0.1px;left:787.00px;width:300px;text-align:center;">117.1%</div>
<div class="r" style="left:699.50px;top:385.62px;width:52.80px;height:17.14px;background:#7dccf3;"></div>
<div class="r" style="left:752.30px;top:385.62px;width:52.80px;height:17.14px;background:#d5eefb;"></div>
<div class="r" style="left:910.70px;top:385.62px;width:52.80px;height:17.14px;background:#fdf2f7;"></div>
<div class="t" style="top:383.46px;height:20px;line-height:20px;font-size:8.5px;color:#666;letter-spacing:0.1px;left:148.30px;">Nov2022_CyberMonday_V1</div>
<div class="t" style="top:383.46px;height:20px;line-height:20px;font-size:8.5px;color:#666;letter-spacing:0.1px;right:713.00px;margin-right:-0.1px;">2</div>
<div class="r" style="left:313.00px;top:389.62px;width:0.80px;height:7.80px;background:#d6d6d6;opacity:0.55;"></div>
<div class="t" style="top:383.46px;height:20px;line-height:20px;font-size:8.5px;color:#666;letter-spacing:0.1px;right:607.40px;margin-right:-0.1px;">0</div>
<div class="r" style="left:418.20px;top:389.62px;width:0.80px;height:7.80px;background:#b3b3b3;opacity:0.55;"></div>
<div class="t" style="top:383.46px;height:20px;line-height:20px;font-size:8.5px;color:#666;letter-spacing:0.1px;right:502.00px;margin-right:-0.1px;">5</div>
<div class="r" style="left:524.00px;top:389.62px;width:0.80px;height:7.80px;background:#1372c2;opacity:0.55;"></div>
<div class="t" style="top:383.46px;height:20px;line-height:20px;font-size:8.5px;color:#666;letter-spacing:0.1px;right:391.30px;margin-right:-0.1px;">20</div>
<div class="r" style="left:634.70px;top:389.62px;width:0.80px;height:7.80px;background:#39b3ef;opacity:0.55;"></div>
<div class="t" style="top:383.46px;height:20px;line-height:20px;font-size:8.5px;color:#666;letter-spacing:0.1px;right:185.40px;margin-right:-0.1px;">0</div>
<div class="r" style="left:840.20px;top:389.62px;width:0.80px;height:7.80px;background:#f18db1;opacity:0.55;"></div>
<div class="t" style="top:383.46px;height:20px;line-height:20px;font-size:8.5px;color:#666;letter-spacing:0.1px;left:205.50px;width:300px;text-align:center;">-</div>
<div class="t" style="top:383.46px;height:20px;line-height:20px;font-size:8.5px;color:#666;letter-spacing:0.1px;left:311.00px;width:300px;text-align:center;">-</div>
<div class="t" style="top:383.46px;height:20px;line-height:20px;font-size:8.5px;color:#666;letter-spacing:0.1px;left:416.50px;width:300px;text-align:center;">-</div>
<div class="t" style="top:383.46px;height:20px;line-height:20px;font-size:8.5px;color:#666;letter-spacing:0.1px;left:522.30px;width:300px;text-align:center;">-</div>
<div class="t" style="top:383.46px;height:20px;line-height:20px;font-size:8.5px;color:#666;letter-spacing:0.1px;left:733.20px;width:300px;text-align:center;">-</div>
<div class="t" style="top:383.46px;height:20px;line-height:20px;font-size:8.5px;color:#666;letter-spacing:0.1px;left:839.00px;width:300px;text-align:center;">-</div>
<div class="t" style="top:383.46px;height:20px;line-height:20px;font-size:8.5px;color:#464646;letter-spacing:0.1px;left:576.00px;width:300px;text-align:center;">100.0%</div>
<div class="t" style="top:383.46px;height:20px;line-height:20px;font-size:8.5px;color:#4a4a4a;letter-spacing:0.25px;left:629.00px;width:300px;text-align:center;">00:02:04</div>
<div class="t" style="top:383.46px;height:20px;line-height:20px;font-size:8.5px;color:#464646;letter-spacing:0.1px;left:787.00px;width:300px;text-align:center;">0.0%</div>
<div class="r" style="left:699.50px;top:402.71px;width:52.80px;height:17.14px;background:#bde5f9;"></div>
<div class="r" style="left:752.30px;top:402.71px;width:52.80px;height:17.14px;background:#e6f5fc;"></div>
<div class="r" style="left:910.70px;top:402.71px;width:52.80px;height:17.14px;background:#fbe4ed;"></div>
<div class="t" style="top:400.56px;height:20px;line-height:20px;font-size:8.5px;color:#666;letter-spacing:0.1px;left:148.30px;">Shopping Free Listings</div>
<div class="t" style="top:400.56px;height:20px;line-height:20px;font-size:8.5px;color:#666;letter-spacing:0.1px;right:713.00px;margin-right:-0.1px;">2</div>
<div class="r" style="left:313.00px;top:406.71px;width:0.80px;height:7.80px;background:#d6d6d6;opacity:0.55;"></div>
<div class="t" style="top:400.56px;height:20px;line-height:20px;font-size:8.5px;color:#666;letter-spacing:0.1px;right:607.40px;margin-right:-0.1px;">0</div>
<div class="r" style="left:418.20px;top:406.71px;width:0.80px;height:7.80px;background:#b3b3b3;opacity:0.55;"></div>
<div class="t" style="top:400.56px;height:20px;line-height:20px;font-size:8.5px;color:#666;letter-spacing:0.1px;right:502.00px;margin-right:-0.1px;">4</div>
<div class="r" style="left:524.00px;top:406.71px;width:0.80px;height:7.80px;background:#1372c2;opacity:0.55;"></div>
<div class="t" style="top:400.56px;height:20px;line-height:20px;font-size:8.5px;color:#666;letter-spacing:0.1px;right:391.30px;margin-right:-0.1px;">9</div>
<div class="r" style="left:634.70px;top:406.71px;width:0.80px;height:7.80px;background:#39b3ef;opacity:0.55;"></div>
<div class="t" style="top:400.56px;height:20px;line-height:20px;font-size:8.5px;color:#666;letter-spacing:0.1px;right:185.40px;margin-right:-0.1px;">1</div>
<div class="r" style="left:840.20px;top:406.71px;width:0.80px;height:7.80px;background:#f18db1;opacity:0.55;"></div>
<div class="t" style="top:400.56px;height:20px;line-height:20px;font-size:8.5px;color:#666;letter-spacing:0.1px;left:205.50px;width:300px;text-align:center;">-90.9%<svg width="2.6" height="5" viewBox="0 0 2.6 5" style="margin-left:3.2px;vertical-align:0px"><path d="M1.3 5 L2.6 3 L1.8 3 L1.8 0 L0.8 0 L0.8 3 L0 3 Z" fill="#ff8a00"/></svg></div>
<div class="t" style="top:400.56px;height:20px;line-height:20px;font-size:8.5px;color:#666;letter-spacing:0.1px;left:311.00px;width:300px;text-align:center;">-100.0%<svg width="2.6" height="5" viewBox="0 0 2.6 5" style="margin-left:3.2px;vertical-align:0px"><path d="M1.3 5 L2.6 3 L1.8 3 L1.8 0 L0.8 0 L0.8 3 L0 3 Z" fill="#ff8a00"/></svg></div>
<div class="t" style="top:400.56px;height:20px;line-height:20px;font-size:8.5px;color:#666;letter-spacing:0.1px;left:416.50px;width:300px;text-align:center;">-93.3%<svg width="2.6" height="5" viewBox="0 0 2.6 5" style="margin-left:3.2px;vertical-align:0px"><path d="M1.3 5 L2.6 3 L1.8 3 L1.8 0 L0.8 0 L0.8 3 L0 3 Z" fill="#ff8a00"/></svg></div>
<div class="t" style="top:400.56px;height:20px;line-height:20px;font-size:8.5px;color:#666;letter-spacing:0.1px;left:522.30px;width:300px;text-align:center;">-98.2%<svg width="2.6" height="5" viewBox="0 0 2.6 5" style="margin-left:3.2px;vertical-align:0px"><path d="M1.3 5 L2.6 3 L1.8 3 L1.8 0 L0.8 0 L0.8 3 L0 3 Z" fill="#ff8a00"/></svg></div>
<div class="t" style="top:400.56px;height:20px;line-height:20px;font-size:8.5px;color:#666;letter-spacing:0.1px;left:733.20px;width:300px;text-align:center;">-99.0%<svg width="2.6" height="5" viewBox="0 0 2.6 5" style="margin-left:3.2px;vertical-align:0px"><path d="M1.3 5 L2.6 3 L1.8 3 L1.8 0 L0.8 0 L0.8 3 L0 3 Z" fill="#ff8a00"/></svg></div>
<div class="t" style="top:400.56px;height:20px;line-height:20px;font-size:8.5px;color:#666;letter-spacing:0.1px;left:839.00px;width:300px;text-align:center;">-85.1%<svg width="2.6" height="5" viewBox="0 0 2.6 5" style="margin-left:3.2px;vertical-align:0px"><path d="M1.3 5 L2.6 3 L1.8 3 L1.8 0 L0.8 0 L0.8 3 L0 3 Z" fill="#ff8a00"/></svg></div>
<div class="t" style="top:400.56px;height:20px;line-height:20px;font-size:8.5px;color:#464646;letter-spacing:0.1px;left:576.00px;width:300px;text-align:center;">50.0%</div>
<div class="t" style="top:400.56px;height:20px;line-height:20px;font-size:8.5px;color:#4a4a4a;letter-spacing:0.25px;left:629.00px;width:300px;text-align:center;">00:01:06</div>
<div class="t" style="top:400.56px;height:20px;line-height:20px;font-size:8.5px;color:#464646;letter-spacing:0.1px;left:787.00px;width:300px;text-align:center;">25.0%</div>
<div class="r" style="left:699.50px;top:419.80px;width:52.80px;height:17.14px;background:#a8ddf7;"></div>
<div class="r" style="left:752.30px;top:419.80px;width:52.80px;height:17.14px;background:#d9f0fb;"></div>
<div class="r" style="left:910.70px;top:419.80px;width:52.80px;height:17.14px;background:#f6b9cf;"></div>
<div class="t" style="top:417.65px;height:20px;line-height:20px;font-size:8.5px;color:#666;letter-spacing:0.1px;left:148.30px;">Sept2022_GBday_V1</div>
<div class="t" style="top:417.65px;height:20px;line-height:20px;font-size:8.5px;color:#666;letter-spacing:0.1px;right:713.00px;margin-right:-0.1px;">2</div>
<div class="r" style="left:313.00px;top:423.80px;width:0.80px;height:7.80px;background:#d6d6d6;opacity:0.55;"></div>
<div class="t" style="top:417.65px;height:20px;line-height:20px;font-size:8.5px;color:#666;letter-spacing:0.1px;right:607.40px;margin-right:-0.1px;">1</div>
<div class="r" style="left:418.20px;top:423.80px;width:0.80px;height:7.80px;background:#b3b3b3;opacity:0.55;"></div>
<div class="t" style="top:417.65px;height:20px;line-height:20px;font-size:8.5px;color:#666;letter-spacing:0.1px;right:502.00px;margin-right:-0.1px;">3</div>
<div class="r" style="left:524.00px;top:423.80px;width:0.80px;height:7.80px;background:#1372c2;opacity:0.55;"></div>
<div class="t" style="top:417.65px;height:20px;line-height:20px;font-size:8.5px;color:#666;letter-spacing:0.1px;right:391.30px;margin-right:-0.1px;">17</div>
<div class="r" style="left:634.70px;top:423.80px;width:0.80px;height:7.80px;background:#39b3ef;opacity:0.55;"></div>
<div class="t" style="top:417.65px;height:20px;line-height:20px;font-size:8.5px;color:#666;letter-spacing:0.1px;right:185.40px;margin-right:-0.1px;">3</div>
<div class="r" style="left:840.20px;top:423.80px;width:0.80px;height:7.80px;background:#f18db1;opacity:0.55;"></div>
<div class="t" style="top:417.65px;height:20px;line-height:20px;font-size:8.5px;color:#666;letter-spacing:0.1px;left:205.50px;width:300px;text-align:center;">-84.6%<svg width="2.6" height="5" viewBox="0 0 2.6 5" style="margin-left:3.2px;vertical-align:0px"><path d="M1.3 5 L2.6 3 L1.8 3 L1.8 0 L0.8 0 L0.8 3 L0 3 Z" fill="#ff8a00"/></svg></div>
<div class="t" style="top:417.65px;height:20px;line-height:20px;font-size:8.5px;color:#666;letter-spacing:0.1px;left:311.00px;width:300px;text-align:center;">-</div>
<div class="t" style="top:417.65px;height:20px;line-height:20px;font-size:8.5px;color:#666;letter-spacing:0.1px;left:416.50px;width:300px;text-align:center;">-87.0%<svg width="2.6" height="5" viewBox="0 0 2.6 5" style="margin-left:3.2px;vertical-align:0px"><path d="M1.3 5 L2.6 3 L1.8 3 L1.8 0 L0.8 0 L0.8 3 L0 3 Z" fill="#ff8a00"/></svg></div>
<div class="t" style="top:417.65px;height:20px;line-height:20px;font-size:8.5px;color:#666;letter-spacing:0.1px;left:522.30px;width:300px;text-align:center;">-96.9%<svg width="2.6" height="5" viewBox="0 0 2.6 5" style="margin-left:3.2px;vertical-align:0px"><path d="M1.3 5 L2.6 3 L1.8 3 L1.8 0 L0.8 0 L0.8 3 L0 3 Z" fill="#ff8a00"/></svg></div>
<div class="t" style="top:417.65px;height:20px;line-height:20px;font-size:8.5px;color:#666;letter-spacing:0.1px;left:733.20px;width:300px;text-align:center;">-98.1%<svg width="2.6" height="5" viewBox="0 0 2.6 5" style="margin-left:3.2px;vertical-align:0px"><path d="M1.3 5 L2.6 3 L1.8 3 L1.8 0 L0.8 0 L0.8 3 L0 3 Z" fill="#ff8a00"/></svg></div>
<div class="t" style="top:417.65px;height:20px;line-height:20px;font-size:8.5px;color:#666;letter-spacing:0.1px;left:839.00px;width:300px;text-align:center;">-85.2%<svg width="2.6" height="5" viewBox="0 0 2.6 5" style="margin-left:3.2px;vertical-align:0px"><path d="M1.3 5 L2.6 3 L1.8 3 L1.8 0 L0.8 0 L0.8 3 L0 3 Z" fill="#ff8a00"/></svg></div>
<div class="t" style="top:417.65px;height:20px;line-height:20px;font-size:8.5px;color:#464646;letter-spacing:0.1px;left:576.00px;width:300px;text-align:center;">66.7%</div>
<div class="t" style="top:417.65px;height:20px;line-height:20px;font-size:8.5px;color:#4a4a4a;letter-spacing:0.25px;left:629.00px;width:300px;text-align:center;">00:01:51</div>
<div class="t" style="top:417.65px;height:20px;line-height:20px;font-size:8.5px;color:#464646;letter-spacing:0.1px;left:787.00px;width:300px;text-align:center;">100.0%</div>
<div class="r" style="left:699.50px;top:436.90px;width:52.80px;height:17.14px;background:#bde5f9;"></div>
<div class="r" style="left:752.30px;top:436.90px;width:52.80px;height:17.14px;background:#f4fafe;"></div>
<div class="r" style="left:910.70px;top:436.90px;width:52.80px;height:17.14px;background:#fdf2f7;"></div>
<div class="t" style="top:434.75px;height:20px;line-height:20px;font-size:8.5px;color:#666;letter-spacing:0.1px;left:148.30px;">June2023_Plastic_Free_July_V1</div>
<div class="t" style="top:434.75px;height:20px;line-height:20px;font-size:8.5px;color:#666;letter-spacing:0.1px;right:713.00px;margin-right:-0.1px;">1</div>
<div class="r" style="left:313.00px;top:440.90px;width:0.80px;height:7.80px;background:#d6d6d6;opacity:0.55;"></div>
<div class="t" style="top:434.75px;height:20px;line-height:20px;font-size:8.5px;color:#666;letter-spacing:0.1px;right:607.40px;margin-right:-0.1px;">0</div>
<div class="r" style="left:418.20px;top:440.90px;width:0.80px;height:7.80px;background:#b3b3b3;opacity:0.55;"></div>
<div class="t" style="top:434.75px;height:20px;line-height:20px;font-size:8.5px;color:#666;letter-spacing:0.1px;right:502.00px;margin-right:-0.1px;">2</div>
<div class="r" style="left:524.00px;top:440.90px;width:0.80px;height:7.80px;background:#1372c2;opacity:0.55;"></div>
<div class="t" style="top:434.75px;height:20px;line-height:20px;font-size:8.5px;color:#666;letter-spacing:0.1px;right:391.30px;margin-right:-0.1px;">2</div>
<div class="r" style="left:634.70px;top:440.90px;width:0.80px;height:7.80px;background:#39b3ef;opacity:0.55;"></div>
<div class="t" style="top:434.75px;height:20px;line-height:20px;font-size:8.5px;color:#666;letter-spacing:0.1px;right:185.40px;margin-right:-0.1px;">0</div>
<div class="r" style="left:840.20px;top:440.90px;width:0.80px;height:7.80px;background:#f18db1;opacity:0.55;"></div>
<div class="t" style="top:434.75px;height:20px;line-height:20px;font-size:8.5px;color:#666;letter-spacing:0.1px;left:205.50px;width:300px;text-align:center;">-</div>
<div class="t" style="top:434.75px;height:20px;line-height:20px;font-size:8.5px;color:#666;letter-spacing:0.1px;left:311.00px;width:300px;text-align:center;">-</div>
<div class="t" style="top:434.75px;height:20px;line-height:20px;font-size:8.5px;color:#666;letter-spacing:0.1px;left:416.50px;width:300px;text-align:center;">-</div>
<div class="t" style="top:434.75px;height:20px;line-height:20px;font-size:8.5px;color:#666;letter-spacing:0.1px;left:522.30px;width:300px;text-align:center;">-</div>
<div class="t" style="top:434.75px;height:20px;line-height:20px;font-size:8.5px;color:#666;letter-spacing:0.1px;left:733.20px;width:300px;text-align:center;">-</div>
<div class="t" style="top:434.75px;height:20px;line-height:20px;font-size:8.5px;color:#666;letter-spacing:0.1px;left:839.00px;width:300px;text-align:center;">-</div>
<div class="t" style="top:434.75px;height:20px;line-height:20px;font-size:8.5px;color:#464646;letter-spacing:0.1px;left:576.00px;width:300px;text-align:center;">50.0%</div>
<div class="t" style="top:434.75px;height:20px;line-height:20px;font-size:8.5px;color:#4a4a4a;letter-spacing:0.25px;left:629.00px;width:300px;text-align:center;">00:00:16</div>
<div class="t" style="top:434.75px;height:20px;line-height:20px;font-size:8.5px;color:#464646;letter-spacing:0.1px;left:787.00px;width:300px;text-align:center;">0.0%</div>
<div class="r" style="left:143.70px;top:454.40px;width:872.70px;height:3.10px;background:#e6e6e6;"></div>
<div class="t" style="top:455.60px;height:20px;line-height:20px;font-size:8px;color:#555;font-weight:bold;left:148.00px;">総計</div>
<div class="t" style="top:455.60px;height:20px;line-height:20px;font-size:8.5px;color:#4a4a4a;font-weight:bold;letter-spacing:0.6px;right:705.20px;margin-right:-0.6px;">83,800</div>
<div class="t" style="top:455.60px;height:20px;line-height:20px;font-size:8.5px;color:#4a4a4a;font-weight:bold;letter-spacing:0.6px;right:599.30px;margin-right:-0.6px;">72,357</div>
<div class="t" style="top:455.60px;height:20px;line-height:20px;font-size:8.5px;color:#4a4a4a;font-weight:bold;letter-spacing:0.6px;right:491.50px;margin-right:-0.6px;">117,045</div>
<div class="t" style="top:455.60px;height:20px;line-height:20px;font-size:8.5px;color:#4a4a4a;font-weight:bold;letter-spacing:0.6px;right:385.25px;margin-right:-0.6px;">397,546</div>
<div class="t" style="top:455.60px;height:20px;line-height:20px;font-size:8.5px;color:#4a4a4a;font-weight:bold;letter-spacing:0.6px;right:174.80px;margin-right:-0.6px;">114,809</div>
<div class="t" style="top:455.60px;height:20px;line-height:20px;font-size:8.5px;color:#4a4a4a;font-weight:bold;letter-spacing:0.45px;left:205.50px;width:300px;text-align:center;">11.6%<svg width="2.6" height="5" viewBox="0 0 2.6 5" style="margin-left:3.2px;vertical-align:0px"><path d="M1.3 0 L2.6 2 L1.8 2 L1.8 5 L0.8 5 L0.8 2 L0 2 Z" fill="#5aae2e"/></svg></div>
<div class="t" style="top:455.60px;height:20px;line-height:20px;font-size:8.5px;color:#4a4a4a;font-weight:bold;letter-spacing:0.45px;left:311.00px;width:300px;text-align:center;">17.1%<svg width="2.6" height="5" viewBox="0 0 2.6 5" style="margin-left:3.2px;vertical-align:0px"><path d="M1.3 0 L2.6 2 L1.8 2 L1.8 5 L0.8 5 L0.8 2 L0 2 Z" fill="#5aae2e"/></svg></div>
<div class="t" style="top:455.60px;height:20px;line-height:20px;font-size:8.5px;color:#4a4a4a;font-weight:bold;letter-spacing:0.45px;left:416.50px;width:300px;text-align:center;">10.1%<svg width="2.6" height="5" viewBox="0 0 2.6 5" style="margin-left:3.2px;vertical-align:0px"><path d="M1.3 0 L2.6 2 L1.8 2 L1.8 5 L0.8 5 L0.8 2 L0 2 Z" fill="#5aae2e"/></svg></div>
<div class="t" style="top:455.60px;height:20px;line-height:20px;font-size:8.5px;color:#4a4a4a;font-weight:bold;letter-spacing:0.45px;left:522.30px;width:300px;text-align:center;">-42.3%<svg width="2.6" height="5" viewBox="0 0 2.6 5" style="margin-left:3.2px;vertical-align:0px"><path d="M1.3 5 L2.6 3 L1.8 3 L1.8 0 L0.8 0 L0.8 3 L0 3 Z" fill="#ff8a00"/></svg></div>
<div class="t" style="top:455.60px;height:20px;line-height:20px;font-size:8.5px;color:#4a4a4a;font-weight:bold;letter-spacing:0.45px;left:733.20px;width:300px;text-align:center;">-50.3%<svg width="2.6" height="5" viewBox="0 0 2.6 5" style="margin-left:3.2px;vertical-align:0px"><path d="M1.3 5 L2.6 3 L1.8 3 L1.8 0 L0.8 0 L0.8 3 L0 3 Z" fill="#ff8a00"/></svg></div>
<div class="t" style="top:455.60px;height:20px;line-height:20px;font-size:8.5px;color:#4a4a4a;font-weight:bold;letter-spacing:0.45px;left:839.00px;width:300px;text-align:center;">-54.8%<svg width="2.6" height="5" viewBox="0 0 2.6 5" style="margin-left:3.2px;vertical-align:0px"><path d="M1.3 5 L2.6 3 L1.8 3 L1.8 0 L0.8 0 L0.8 3 L0 3 Z" fill="#ff8a00"/></svg></div>
<div class="t" style="top:455.60px;height:20px;line-height:20px;font-size:8.5px;color:#4a4a4a;font-weight:bold;letter-spacing:0.45px;left:576.00px;width:300px;text-align:center;">55.7%</div>
<div class="t" style="top:455.60px;height:20px;line-height:20px;font-size:8.5px;color:#4a4a4a;font-weight:bold;letter-spacing:0.45px;left:629.00px;width:300px;text-align:center;">00:01:28</div>
<div class="t" style="top:455.60px;height:20px;line-height:20px;font-size:8.5px;color:#4a4a4a;font-weight:bold;letter-spacing:0.45px;left:787.00px;width:300px;text-align:center;">98.1%</div>
<div class="t" style="top:473.30px;height:20px;line-height:20px;font-size:5.2px;color:#b0b0b0;letter-spacing:0.22px;left:148.00px;">最終更新日: 2024/1/28 16:17:53 | <span style="text-decoration:underline">プライバシー ポリシー</span></div>
<div class="t" style="top:469.50px;height:20px;line-height:20px;font-size:6.6px;color:#9a9a9a;letter-spacing:0.3px;right:5.70px;margin-right:-0.3px;">©reposub. All rights reserved.</div>
<div class="r" style="left:135.00px;top:487.00px;width:888.00px;height:1.20px;background:#e4e4e4;"></div>
<div class="t" style="left:47px;top:11px;width:100px;height:100px;line-height:100px;text-align:center;font-size:48px;font-weight:bold;color:rgba(0,0,0,0.027);transform:rotate(35deg);">r</div>
<div class="t" style="left:127px;top:54px;width:100px;height:100px;line-height:100px;text-align:center;font-size:48px;font-weight:bold;color:rgba(0,0,0,0.027);transform:rotate(35deg);">e</div>
<div class="t" style="left:205px;top:110px;width:100px;height:100px;line-height:100px;text-align:center;font-size:48px;font-weight:bold;color:rgba(0,0,0,0.027);transform:rotate(35deg);">p</div>
<div class="t" style="left:291px;top:154px;width:100px;height:100px;line-height:100px;text-align:center;font-size:48px;font-weight:bold;color:rgba(0,0,0,0.027);transform:rotate(35deg);">o</div>
<div class="t" style="left:373px;top:200px;width:100px;height:100px;line-height:100px;text-align:center;font-size:48px;font-weight:bold;color:rgba(0,0,0,0.027);transform:rotate(35deg);">s</div>
<div class="t" style="left:447px;top:243px;width:100px;height:100px;line-height:100px;text-align:center;font-size:48px;font-weight:bold;color:rgba(0,0,0,0.027);transform:rotate(35deg);">u</div>
<div class="t" style="left:527px;top:286px;width:100px;height:100px;line-height:100px;text-align:center;font-size:48px;font-weight:bold;color:rgba(0,0,0,0.027);transform:rotate(35deg);">b</div>
<div class="t" style="left:602px;top:340px;width:100px;height:100px;line-height:100px;text-align:center;font-size:48px;font-weight:bold;color:rgba(0,0,0,0.027);transform:rotate(35deg);">.</div>
<div class="t" style="left:673px;top:384px;width:100px;height:100px;line-height:100px;text-align:center;font-size:48px;font-weight:bold;color:rgba(0,0,0,0.027);transform:rotate(35deg);">r</div>
<div class="t" style="left:746px;top:420px;width:100px;height:100px;line-height:100px;text-align:center;font-size:48px;font-weight:bold;color:rgba(0,0,0,0.027);transform:rotate(35deg);">e</div>
<svg style="position:absolute;left:854.8px;top:524.80px" width="163.00" height="43.50" viewBox="0 -5 163 43.5"><g fill="#808080" stroke="#808080" stroke-width="0" stroke-linejoin="round"><path d="M0 2.1 L5.9 2.1 L5.9 30.9 C15 29.5 23.5 23 26.8 13.2 L32.1 13.2 C29 27 17 37 0 37.1 Z"/><path d="M39.6 7 L74.7 7 L74.7 12 L39.6 12 Z"/><path d="M54.3 1.7 L60.1 1.7 L60.1 38 L54.3 38 Z"/><path d="M44.4 15.5 L49.2 15.5 C49 24 46 31 39.2 35.7 L39.2 29.5 C43 25.5 44.3 21 44.4 15.5 Z"/><path d="M70.5 15.5 L65.3 15.5 C65.5 24 69 31 75.6 35.7 L75.6 29.5 C72 25.5 70.6 21 70.5 15.5 Z"/><circle cx="70.8" cy="3.0" r="3.25" fill="none" style="stroke-width:2.3px"/><path d="M80.5 9.1 L119.2 9.1 L119.2 14.4 L80.5 14.4 Z"/><path d="M87.3 2.1 L93.2 2.1 L93.2 24.8 L87.3 24.8 Z"/><path d="M106.8 2.1 L112.6 2.1 L112.6 20 C112.6 29 105 37.5 90.7 37.5 L90.7 32.7 C101 32.5 106.8 27 106.8 19 Z"/><path d="M126 3.2 L158.7 3.2 C158.7 22 148 36 130.6 37.2 L130.6 31.8 C144 30 152 21 152.5 8.5 L126 8.5 Z"/><path d="M153.5 0 L157 0 L157 3.5 L153.5 3.5 Z"/><path d="M159 0 L162.2 0 L162.2 5.4 L159 5.4 Z"/></g></svg>
<div style="position:absolute;left:0;top:0;width:1024px;height:576px;box-sizing:border-box;border:1px solid #8a8a8a;"></div>
</div></body></html>
